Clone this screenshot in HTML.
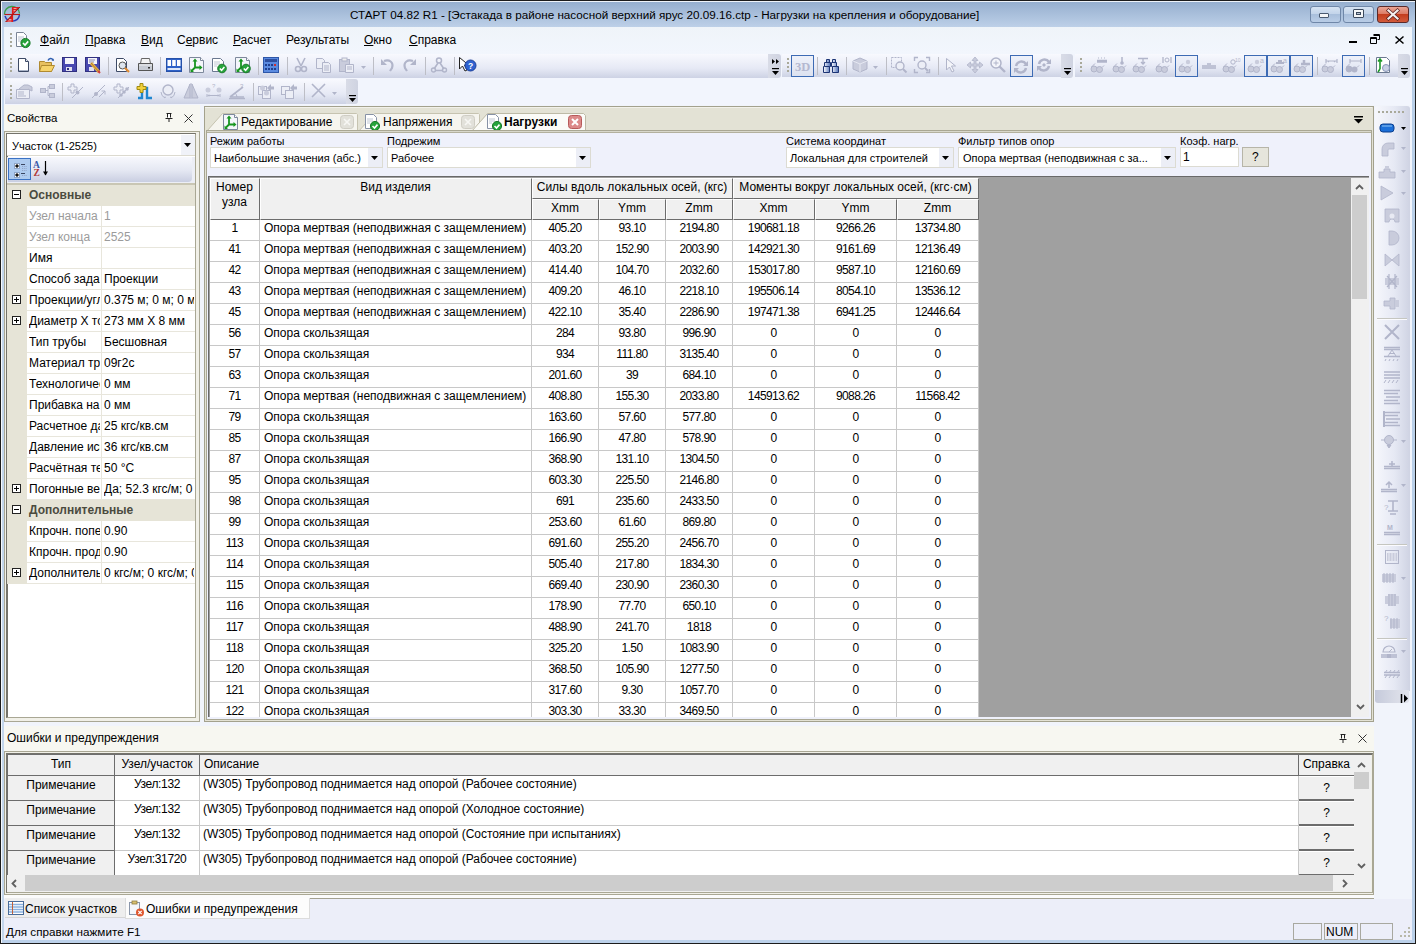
<!DOCTYPE html>
<html><head><meta charset="utf-8">
<style>
*{box-sizing:border-box}
html,body{margin:0;padding:0}
body{width:1416px;height:944px;overflow:hidden;position:relative;background:#f1f4fb;font-family:"Liberation Sans",sans-serif;font-size:12px;color:#000}
.a{position:absolute}
.t{position:absolute;white-space:nowrap;line-height:14px}
svg{position:absolute;overflow:visible}
</style></head><body>
<!-- window frame -->
<div class="a" style="left:0;top:0;width:1416px;height:1px;background:#1c1c1c"></div>
<div class="a" style="left:0;top:943px;width:1416px;height:1px;background:#1c1c1c"></div>
<div class="a" style="left:0;top:0;width:1px;height:944px;background:#1c1c1c"></div>
<div class="a" style="left:1415px;top:0;width:1px;height:944px;background:#1c1c1c"></div>
<div class="a" style="left:1px;top:1px;width:1414px;height:1px;background:#eef3f9"></div>
<!-- title bar -->
<div class="a" style="left:2px;top:2px;width:1413px;height:25px;background:linear-gradient(#96afcf,#bdd0e8)"></div>
<div class="a" style="left:1px;top:2px;width:1px;height:940px;background:#f4f8fc"></div><div class="a" style="left:2px;top:27px;width:2px;height:914px;background:#c3d6ec"></div>
<div class="a" style="left:1412px;top:27px;width:3px;height:914px;background:#b9cfe8"></div>
<div class="a" style="left:2px;top:940px;width:1413px;height:3px;background:#bcd1ea"></div>
<div class="t" style="left:350px;top:8px;font-size:11.7px;color:#000">СТАРТ 04.82 R1 - [Эстакада в районе насосной верхний ярус 20.09.16.ctp - Нагрузки на крепления и оборудование]</div>
<!-- app icon -->
<svg style="left:4px;top:6px" width="17" height="17" viewBox="0 0 17 17">
<path d="M0.5 8.5A7.5 7.5 0 0 1 15.5 7.5" fill="none" stroke="#3aa04a" stroke-width="1.4"/>
<path d="M15.5 9A7.5 7.5 0 0 1 1 10" fill="none" stroke="#2b3fb8" stroke-width="1.4"/>
<path d="M8.5 1H16L8.5 8.5Z" fill="#d42020"/>
<path d="M1.5 16H8.5V8.5Z" fill="#d42020"/>
<path fill="none" d="M9.5 2.5h3M9.5 4.5h2M9.5 6h1M7.5 11v0M5 13.5h2.5M3.5 15h4" stroke="#f6c0c0" stroke-width="0.8"/>
<path fill="none" d="M0.5 8.5H16" stroke="#b81818" stroke-width="1.1"/>
<path fill="none" d="M8.5 1V16" stroke="#e01a1a" stroke-width="1.2"/>
<path fill="none" d="M16 1L1.5 16" stroke="#9a1010" stroke-width="0.9"/>
</svg>
<!-- title buttons -->
<div class="a" style="left:1310px;top:6px;width:31px;height:17px;border:1px solid #6f87a8;border-radius:3px;background:linear-gradient(#d6e3f2 0%,#c3d4ea 45%,#a9bfdc 50%,#b9cde6 100%)"></div>
<div class="a" style="left:1319px;top:13px;width:10px;height:5px;border:1px solid #4a5a70;border-radius:1px;background:#f4f6f8"></div>
<div class="a" style="left:1343px;top:6px;width:31px;height:17px;border:1px solid #6f87a8;border-radius:3px;background:linear-gradient(#d6e3f2 0%,#c3d4ea 45%,#a9bfdc 50%,#b9cde6 100%)"></div>
<div class="a" style="left:1353px;top:9px;width:11px;height:9px;border:1px solid #3c4a5e;border-radius:1px;background:#f4f6f8"></div>
<div class="a" style="left:1356px;top:12px;width:5px;height:3px;border:1px solid #3c4a5e;background:#b9c6d6"></div>
<div class="a" style="left:1377px;top:6px;width:32px;height:17px;border:1px solid #5a2a2a;border-radius:3px;background:linear-gradient(#e8a595 0%,#dc7c66 45%,#c33d1e 50%,#d25a3a 100%)"></div>
<svg style="left:1386px;top:9px" width="14" height="11" viewBox="0 0 14 11"><path fill="none" d="M2.5 1.5L11.5 9.5M11.5 1.5L2.5 9.5" stroke="#5a2020" stroke-width="3.6" stroke-linecap="square"/><path fill="none" d="M2.5 1.5L11.5 9.5M11.5 1.5L2.5 9.5" stroke="#f4f0f0" stroke-width="2.2" stroke-linecap="square"/></svg>
<!-- menu bar -->
<div class="a" style="left:4px;top:27px;width:1408px;height:27px;background:linear-gradient(#eff4f9,#f2f6fd)"></div>
<div class="a" style="left:4px;top:54px;width:1408px;height:51px;background:#f2f5fd"></div>
<!-- menu -->
<div class="a" style="left:10px;top:33px;width:2px;height:14px;background:repeating-linear-gradient(#a9a99a 0 2px,transparent 2px 4px)"></div>
<svg style="left:15px;top:32px" width="16" height="16" viewBox="0 0 16 16">
<path d="M1.5 0.5H8.5L11.5 3.5V14.5H1.5Z" fill="#fff" stroke="#7a8596"/>
<path fill="none" d="M3 5h6M3 7h6M3 9h3" stroke="#b8c2d0"/>
<circle cx="10.5" cy="11" r="4.6" fill="#24a33a" stroke="#1b7a2b"/>
<path d="M8 11l2 2 3.2-3.6" stroke="#fff" stroke-width="1.6" fill="none"/>
</svg>
<div class="t" style="left:40px;top:33px;font-size:12px"><u>Ф</u>айл</div>
<div class="t" style="left:85px;top:33px;font-size:12px"><u>П</u>равка</div>
<div class="t" style="left:141px;top:33px;font-size:12px"><u>В</u>ид</div>
<div class="t" style="left:177px;top:33px;font-size:12px">С<u>е</u>рвис</div>
<div class="t" style="left:233px;top:33px;font-size:12px"><u>Р</u>асчет</div>
<div class="t" style="left:286px;top:33px;font-size:12px">Результаты</div>
<div class="t" style="left:364px;top:33px;font-size:12px"><u>О</u>кно</div>
<div class="t" style="left:409px;top:33px;font-size:12px"><u>С</u>правка</div>
<!-- MDI buttons -->
<div class="a" style="left:1349px;top:41px;width:8px;height:2px;background:#000"></div>
<svg style="left:1370px;top:34px" width="10" height="10" viewBox="0 0 10 10"><path d="M3.5 0.5h6v5h-2M0.5 3.5h6v6h-6z" fill="none" stroke="#000"/><path fill="none" d="M3.5 1.5h6M0.5 4.5h6" stroke="#000"/></svg>
<svg style="left:1395px;top:36px" width="9" height="8" viewBox="0 0 9 8"><path fill="none" d="M0.5 0.5L8.5 7.5M8.5 0.5L0.5 7.5" stroke="#000" stroke-width="1.5"/></svg>
<!-- toolbar backgrounds -->
<div class="a" style="left:5px;top:54px;width:764px;height:24px;border-radius:0 0 0 0;background:linear-gradient(#f8f9fe,#e6e9f5 60%,#cdd2e4)"></div>
<div class="a" style="left:768px;top:54px;width:13px;height:24px;border-radius:0 3px 3px 0;background:linear-gradient(90deg,#d9dce7,#cfd3e1)"></div>
<div class="a" style="left:782px;top:54px;width:279px;height:23px;background:linear-gradient(#f8f9fe,#e6e9f5 60%,#cdd2e4)"></div>
<div class="a" style="left:1061px;top:54px;width:12px;height:24px;border-radius:0 3px 3px 0;background:linear-gradient(90deg,#d9dce7,#cfd3e1)"></div>
<div class="a" style="left:1075px;top:54px;width:324px;height:23px;background:linear-gradient(#f8f9fe,#e6e9f5 60%,#cdd2e4)"></div>
<div class="a" style="left:1398px;top:54px;width:12px;height:24px;border-radius:0 3px 3px 0;background:linear-gradient(90deg,#d9dce7,#cfd3e1)"></div>
<div class="a" style="left:5px;top:79px;width:342px;height:25px;background:linear-gradient(#f8f9fe,#e6e9f5 60%,#cdd2e4)"></div>
<div class="a" style="left:346px;top:79px;width:12px;height:25px;border-radius:0 3px 3px 0;background:linear-gradient(90deg,#d9dce7,#cfd3e1)"></div>
<!-- grips -->
<div class="a" style="left:10px;top:58px;width:2px;height:15px;background:repeating-linear-gradient(#a9a99a 0 2px,transparent 2px 4px)"></div>
<div class="a" style="left:10px;top:85px;width:2px;height:15px;background:repeating-linear-gradient(#a9a99a 0 2px,transparent 2px 4px)"></div>
<div class="a" style="left:787px;top:58px;width:2px;height:15px;background:repeating-linear-gradient(#a9a99a 0 2px,transparent 2px 4px)"></div>
<div class="a" style="left:1080px;top:58px;width:2px;height:15px;background:repeating-linear-gradient(#a9a99a 0 2px,transparent 2px 4px)"></div>
<!-- chevrons -->
<svg style="left:771px;top:58px" width="9" height="18" viewBox="0 0 9 18"><path d="M1 1L4 3.5L1 6ZM5 1L8 3.5L5 6Z" fill="#000"/><rect x="1" y="10" width="7" height="1.2" fill="#000"/><path d="M1 13H8L4.5 17Z" fill="#000"/></svg>
<svg style="left:1063px;top:68px" width="9" height="8" viewBox="0 0 9 8"><rect x="1" y="0" width="7" height="1.2" fill="#000"/><path d="M1 3H8L4.5 7Z" fill="#000"/></svg>
<svg style="left:1400px;top:68px" width="9" height="8" viewBox="0 0 9 8"><rect x="1" y="0" width="7" height="1.2" fill="#000"/><path d="M1 3H8L4.5 7Z" fill="#000"/></svg>
<svg style="left:348px;top:95px" width="9" height="8" viewBox="0 0 9 8"><rect x="1" y="0" width="7" height="1.2" fill="#000"/><path d="M1 3H8L4.5 7Z" fill="#000"/></svg>
<!-- properties panel -->
<div class="a" style="left:4px;top:105px;width:196px;height:26px;background:#f7f7f1"></div>
<div class="t" style="left:7px;top:111px;font-size:11.5px">Свойства</div>
<svg style="left:165px;top:113px" width="8" height="9" viewBox="0 0 8 9"><path d="M1.5 0.5h5M2.5 0.5v4M5.5 0.5v4M0.5 5.5h7M4 5.5v3.5" stroke="#222" fill="none"/><path d="M3 1h2v4h-2z" fill="#fff"/></svg>
<svg style="left:184px;top:114px" width="9" height="9" viewBox="0 0 9 9"><path fill="none" d="M0.5 0.5L8.5 8.5M8.5 0.5L0.5 8.5" stroke="#333" stroke-width="1"/></svg>
<div class="a" style="left:4px;top:131px;width:196px;height:591px;border:1px solid #a9a794;background:#f1f0e8"></div>
<div class="a" style="left:6px;top:133px;width:190px;height:585px;border-left:2px solid #74736b;border-top:2px solid #74736b;border-right:1px solid #a9a794;border-bottom:1px solid #a9a794"></div>

<div class="a" style="left:8px;top:135px;width:187px;height:582px;background:#fff"></div>
<!-- combo -->
<div class="a" style="left:7px;top:134px;width:188px;height:22px;background:#fff;border-bottom:1px solid #dcdad0"></div>
<div class="t" style="left:12px;top:139px;font-size:11px">Участок (1-2525)</div>
<div class="a" style="left:181px;top:135px;width:14px;height:20px;background:#f0f2f8"></div>
<svg style="left:184px;top:143px" width="7" height="4" viewBox="0 0 7 4"><path d="M0 0h7l-3.5 4z" fill="#000"/></svg>
<!-- toolbar -->
<div class="a" style="left:7px;top:157px;width:188px;height:26px;background:#eceef6"></div>
<div class="a" style="left:8px;top:157px;width:184px;height:25px;border-radius:0 0 4px 0;background:linear-gradient(#f7f8fd,#e4e7f2 55%,#c9cee1)"></div>
<div class="a" style="left:8px;top:158px;width:23px;height:22px;background:#aecbef;border:1px solid #3a72c4"></div>
<svg style="left:11px;top:161px" width="17" height="16" viewBox="0 0 17 16">
<rect x="3.5" y="2.5" width="5" height="5" fill="#fff" stroke="#8fa6c8"/><path d="M4.3 5h3.4M6 3.3v3.4" stroke="#000" stroke-width="1.4"/>
<rect x="3.5" y="11.5" width="5" height="5" fill="#fff" stroke="#8fa6c8"/><path d="M4.3 14h3.4M6 12.3v3.4" stroke="#000" stroke-width="1.4"/>
<path d="M10 3.5h4M10 12.5h4" stroke="#3a4560" stroke-width="1.2"/>
<path d="M11 5.5h5M11 7.5h5M11 9.5h5M11 14.5h5" stroke="#8fa2c4" stroke-dasharray="1.2 1" stroke-width="0.9"/>
</svg>
<svg style="left:33px;top:160px" width="18" height="18" viewBox="0 0 18 18">
<text x="0" y="8" font-family="Liberation Serif" font-size="9.5" font-weight="bold" fill="#3b58a8">A</text>
<text x="0.5" y="16" font-family="Liberation Serif" font-size="9.5" font-weight="bold" fill="#b03838">Z</text>
<path d="M12.5 1V15" stroke="#000" stroke-width="1.2" fill="none"/><path d="M10 11.5L12.5 15.5L15 11.5Z" fill="#000"/>
</svg>
<div class="a" style="left:7px;top:183px;width:188px;height:2px;background:#c9c6b4"></div>
<!-- property grid -->
<div class="a" style="left:7px;top:185px;width:20px;height:399px;background:#e6e4d7"></div>
<div class="a" style="left:7px;top:185px;width:188px;height:21px;background:#e6e4d7"></div>
<svg style="left:12px;top:190px" width="9" height="9" viewBox="0 0 9 9"><rect x="0.5" y="0.5" width="8" height="8" fill="#fff" stroke="#222"/><path fill="none" d="M2 4.5h5" stroke="#000"/></svg>
<div class="t" style="left:29px;top:188px;font-size:12px;font-weight:bold;color:#4b4b3f">Основные</div>
<div class="a" style="left:27px;top:206px;width:168px;height:21px;background:#fff;border-bottom:1px solid #e8e6dc"></div>
<div class="a" style="left:101px;top:206px;width:1px;height:21px;background:#e8e6dc"></div>
<div class="t" style="left:29px;top:209px;width:71px;overflow:hidden;font-size:12px;color:#9b9b9b">Узел начала</div>
<div class="t" style="left:104px;top:209px;width:90px;overflow:hidden;font-size:12px;color:#9b9b9b">1</div>
<div class="a" style="left:27px;top:227px;width:168px;height:21px;background:#fff;border-bottom:1px solid #e8e6dc"></div>
<div class="a" style="left:101px;top:227px;width:1px;height:21px;background:#e8e6dc"></div>
<div class="t" style="left:29px;top:230px;width:71px;overflow:hidden;font-size:12px;color:#9b9b9b">Узел конца</div>
<div class="t" style="left:104px;top:230px;width:90px;overflow:hidden;font-size:12px;color:#9b9b9b">2525</div>
<div class="a" style="left:27px;top:248px;width:168px;height:21px;background:#fff;border-bottom:1px solid #e8e6dc"></div>
<div class="a" style="left:101px;top:248px;width:1px;height:21px;background:#e8e6dc"></div>
<div class="t" style="left:29px;top:251px;width:71px;overflow:hidden;font-size:12px;color:#000">Имя</div>
<div class="a" style="left:27px;top:269px;width:168px;height:21px;background:#fff;border-bottom:1px solid #e8e6dc"></div>
<div class="a" style="left:101px;top:269px;width:1px;height:21px;background:#e8e6dc"></div>
<div class="t" style="left:29px;top:272px;width:71px;overflow:hidden;font-size:12px;color:#000">Способ задания</div>
<div class="t" style="left:104px;top:272px;width:90px;overflow:hidden;font-size:12px;color:#000">Проекции</div>
<div class="a" style="left:27px;top:290px;width:168px;height:21px;background:#fff;border-bottom:1px solid #e8e6dc"></div>
<div class="a" style="left:101px;top:290px;width:1px;height:21px;background:#e8e6dc"></div>
<div class="t" style="left:29px;top:293px;width:71px;overflow:hidden;font-size:12px;color:#000">Проекции/углы</div>
<div class="t" style="left:104px;top:293px;width:90px;overflow:hidden;font-size:12px;color:#000">0.375 м; 0 м; 0 м</div>
<svg style="left:12px;top:295px" width="9" height="9" viewBox="0 0 9 9"><rect x="0.5" y="0.5" width="8" height="8" fill="#fff" stroke="#222"/><path fill="none" d="M2 4.5h5M4.5 2v5" stroke="#000"/></svg>
<div class="a" style="left:27px;top:311px;width:168px;height:21px;background:#fff;border-bottom:1px solid #e8e6dc"></div>
<div class="a" style="left:101px;top:311px;width:1px;height:21px;background:#e8e6dc"></div>
<div class="t" style="left:29px;top:314px;width:71px;overflow:hidden;font-size:12px;color:#000">Диаметр X толщина</div>
<div class="t" style="left:104px;top:314px;width:90px;overflow:hidden;font-size:12px;color:#000">273 мм X 8 мм</div>
<svg style="left:12px;top:316px" width="9" height="9" viewBox="0 0 9 9"><rect x="0.5" y="0.5" width="8" height="8" fill="#fff" stroke="#222"/><path fill="none" d="M2 4.5h5M4.5 2v5" stroke="#000"/></svg>
<div class="a" style="left:27px;top:332px;width:168px;height:21px;background:#fff;border-bottom:1px solid #e8e6dc"></div>
<div class="a" style="left:101px;top:332px;width:1px;height:21px;background:#e8e6dc"></div>
<div class="t" style="left:29px;top:335px;width:71px;overflow:hidden;font-size:12px;color:#000">Тип трубы</div>
<div class="t" style="left:104px;top:335px;width:90px;overflow:hidden;font-size:12px;color:#000">Бесшовная</div>
<div class="a" style="left:27px;top:353px;width:168px;height:21px;background:#fff;border-bottom:1px solid #e8e6dc"></div>
<div class="a" style="left:101px;top:353px;width:1px;height:21px;background:#e8e6dc"></div>
<div class="t" style="left:29px;top:356px;width:71px;overflow:hidden;font-size:12px;color:#000">Материал трубы</div>
<div class="t" style="left:104px;top:356px;width:90px;overflow:hidden;font-size:12px;color:#000">09г2с</div>
<div class="a" style="left:27px;top:374px;width:168px;height:21px;background:#fff;border-bottom:1px solid #e8e6dc"></div>
<div class="a" style="left:101px;top:374px;width:1px;height:21px;background:#e8e6dc"></div>
<div class="t" style="left:29px;top:377px;width:71px;overflow:hidden;font-size:12px;color:#000">Технологический</div>
<div class="t" style="left:104px;top:377px;width:90px;overflow:hidden;font-size:12px;color:#000">0 мм</div>
<div class="a" style="left:27px;top:395px;width:168px;height:21px;background:#fff;border-bottom:1px solid #e8e6dc"></div>
<div class="a" style="left:101px;top:395px;width:1px;height:21px;background:#e8e6dc"></div>
<div class="t" style="left:29px;top:398px;width:71px;overflow:hidden;font-size:12px;color:#000">Прибавка на коррозию</div>
<div class="t" style="left:104px;top:398px;width:90px;overflow:hidden;font-size:12px;color:#000">0 мм</div>
<div class="a" style="left:27px;top:416px;width:168px;height:21px;background:#fff;border-bottom:1px solid #e8e6dc"></div>
<div class="a" style="left:101px;top:416px;width:1px;height:21px;background:#e8e6dc"></div>
<div class="t" style="left:29px;top:419px;width:71px;overflow:hidden;font-size:12px;color:#000">Расчетное давление</div>
<div class="t" style="left:104px;top:419px;width:90px;overflow:hidden;font-size:12px;color:#000">25 кгс/кв.см</div>
<div class="a" style="left:27px;top:437px;width:168px;height:21px;background:#fff;border-bottom:1px solid #e8e6dc"></div>
<div class="a" style="left:101px;top:437px;width:1px;height:21px;background:#e8e6dc"></div>
<div class="t" style="left:29px;top:440px;width:71px;overflow:hidden;font-size:12px;color:#000">Давление испытаний</div>
<div class="t" style="left:104px;top:440px;width:90px;overflow:hidden;font-size:12px;color:#000">36 кгс/кв.см</div>
<div class="a" style="left:27px;top:458px;width:168px;height:21px;background:#fff;border-bottom:1px solid #e8e6dc"></div>
<div class="a" style="left:101px;top:458px;width:1px;height:21px;background:#e8e6dc"></div>
<div class="t" style="left:29px;top:461px;width:71px;overflow:hidden;font-size:12px;color:#000">Расчётная температура</div>
<div class="t" style="left:104px;top:461px;width:90px;overflow:hidden;font-size:12px;color:#000">50 °C</div>
<div class="a" style="left:27px;top:479px;width:168px;height:21px;background:#fff;border-bottom:1px solid #e8e6dc"></div>
<div class="a" style="left:101px;top:479px;width:1px;height:21px;background:#e8e6dc"></div>
<div class="t" style="left:29px;top:482px;width:71px;overflow:hidden;font-size:12px;color:#000">Погонные веса</div>
<div class="t" style="left:104px;top:482px;width:90px;overflow:hidden;font-size:12px;color:#000">Да; 52.3 кгс/м; 0 кгс/м</div>
<svg style="left:12px;top:484px" width="9" height="9" viewBox="0 0 9 9"><rect x="0.5" y="0.5" width="8" height="8" fill="#fff" stroke="#222"/><path fill="none" d="M2 4.5h5M4.5 2v5" stroke="#000"/></svg>
<div class="a" style="left:7px;top:500px;width:188px;height:21px;background:#e6e4d7"></div>
<svg style="left:12px;top:505px" width="9" height="9" viewBox="0 0 9 9"><rect x="0.5" y="0.5" width="8" height="8" fill="#fff" stroke="#222"/><path fill="none" d="M2 4.5h5" stroke="#000"/></svg>
<div class="t" style="left:29px;top:503px;font-size:12px;font-weight:bold;color:#4b4b3f">Дополнительные</div>
<div class="a" style="left:27px;top:521px;width:168px;height:21px;background:#fff;border-bottom:1px solid #e8e6dc"></div>
<div class="a" style="left:101px;top:521px;width:1px;height:21px;background:#e8e6dc"></div>
<div class="t" style="left:29px;top:524px;width:71px;overflow:hidden;font-size:12px;color:#000">Кпрочн. поперечного</div>
<div class="t" style="left:104px;top:524px;width:90px;overflow:hidden;font-size:12px;color:#000">0.90</div>
<div class="a" style="left:27px;top:542px;width:168px;height:21px;background:#fff;border-bottom:1px solid #e8e6dc"></div>
<div class="a" style="left:101px;top:542px;width:1px;height:21px;background:#e8e6dc"></div>
<div class="t" style="left:29px;top:545px;width:71px;overflow:hidden;font-size:12px;color:#000">Кпрочн. продольного</div>
<div class="t" style="left:104px;top:545px;width:90px;overflow:hidden;font-size:12px;color:#000">0.90</div>
<div class="a" style="left:27px;top:563px;width:168px;height:21px;background:#fff;border-bottom:1px solid #e8e6dc"></div>
<div class="a" style="left:101px;top:563px;width:1px;height:21px;background:#e8e6dc"></div>
<div class="t" style="left:29px;top:566px;width:71px;overflow:hidden;font-size:12px;color:#000">Дополнительные нагрузки</div>
<div class="t" style="left:104px;top:566px;width:90px;overflow:hidden;font-size:12px;color:#000">0 кгс/м; 0 кгс/м; 0</div>
<svg style="left:12px;top:568px" width="9" height="9" viewBox="0 0 9 9"><rect x="0.5" y="0.5" width="8" height="8" fill="#fff" stroke="#222"/><path fill="none" d="M2 4.5h5M4.5 2v5" stroke="#000"/></svg>
<!-- document area -->
<div class="a" style="left:204px;top:106px;width:1170px;height:616px;background:#e3e2d5;border:1px solid #a3a18d"></div>
<div class="a" style="left:205px;top:107px;width:1167px;height:1px;background:#f2f1ea"></div>
<!-- tabs -->
<svg style="left:205px;top:113px" width="385" height="19" viewBox="0 0 385 19">
<path d="M1.5 18.5L17.5 0.5H151.5L152.5 1.5V18.5Z" fill="#f6f5ef" stroke="#c6c3b0"/>
<path d="M153.5 18.5L169.5 0.5H273.5L274.5 1.5V18.5Z" fill="#f6f5ef" stroke="#c6c3b0"/>
<path d="M266.5 18.5L282.5 0.5H378.5L380.5 2.5V18.5" fill="#fbfbf8" stroke="#bdbaa6"/>
</svg>
<!-- tab icons -->
<svg style="left:223px;top:114px" width="16" height="17" viewBox="0 0 16 17">
<path d="M0.5 0.5H11.5L14.5 3.5V15.5H0.5Z" fill="#f4f6fb" stroke="#7d889c"/>
<path d="M11.5 0.5V3.5H14.5" fill="#fff" stroke="#7d889c"/>
<path d="M6 4V10.5H11M6 10.5L3 13.5" fill="none" stroke="#17951f" stroke-width="1.8"/>
<path d="M3.5 4.5L6 1.5L8.5 4.5ZM10.5 8L13.5 10.5L10.5 13ZM1.5 11.5V15H5Z" fill="#17951f"/>
</svg>
<div class="t" style="left:241px;top:115px;font-size:12px">Редактирование</div>
<svg style="left:340px;top:115px" width="14" height="14" viewBox="0 0 14 14"><rect x="0.5" y="0.5" width="13" height="13" rx="3" fill="#e2e1da" stroke="#cfcdc4"/><path fill="none" d="M4 4l6 6M10 4l-6 6" stroke="#f7f7f4" stroke-width="1.6"/></svg>
<svg style="left:364px;top:114px" width="17" height="17" viewBox="0 0 17 17">
<path d="M1.5 0.5H9.5L12.5 3.5V14.5H1.5Z" fill="#fff" stroke="#8792a6"/>
<path fill="none" d="M3 5h6M3 7h6M3 9h3" stroke="#c0c8d4"/>
<circle cx="11" cy="12" r="4.6" fill="#24a33a" stroke="#1b7a2b"/>
<path d="M8.5 12l2 2 3-3.4" stroke="#fff" stroke-width="1.6" fill="none"/>
</svg>
<div class="t" style="left:383px;top:115px;font-size:12px">Напряжения</div>
<svg style="left:461px;top:115px" width="14" height="14" viewBox="0 0 14 14"><rect x="0.5" y="0.5" width="13" height="13" rx="3" fill="#e2e1da" stroke="#cfcdc4"/><path fill="none" d="M4 4l6 6M10 4l-6 6" stroke="#f7f7f4" stroke-width="1.6"/></svg>
<svg style="left:486px;top:114px" width="17" height="17" viewBox="0 0 17 17">
<path d="M1.5 0.5H9.5L12.5 3.5V14.5H1.5Z" fill="#fff" stroke="#8792a6"/>
<path fill="none" d="M3 5h6M3 7h6M3 9h3" stroke="#c0c8d4"/>
<circle cx="11" cy="12" r="4.6" fill="#24a33a" stroke="#1b7a2b"/>
<path d="M8.5 12l2 2 3-3.4" stroke="#fff" stroke-width="1.6" fill="none"/>
</svg>
<div class="t" style="left:504px;top:115px;font-size:12px;font-weight:bold">Нагрузки</div>
<svg style="left:568px;top:115px" width="14" height="14" viewBox="0 0 14 14"><rect x="0.5" y="0.5" width="13" height="13" rx="3" fill="#dc8a8a" stroke="#b75a5a"/><path fill="none" d="M4 4l6 6M10 4l-6 6" stroke="#fff" stroke-width="2"/></svg>
<!-- chevron right of tab strip -->
<svg style="left:1354px;top:116px" width="9" height="8" viewBox="0 0 9 8"><rect x="0" y="0" width="9" height="1.5" fill="#000"/><path d="M0 3H9L4.5 7.5Z" fill="#000"/></svg>
<!-- content panel -->
<div class="a" style="left:206px;top:130px;width:1166px;height:590px;background:#eff1fb;border:1px solid #a9a793"></div>
<div class="a" style="left:207px;top:131px;width:1164px;height:1px;background:#d9d8cb"></div>
<div class="a" style="left:207px;top:132px;width:1164px;height:1px;background:#b3b19e"></div>

<!-- labels/combos -->
<div class="t" style="left:210px;top:134px;font-size:11px">Режим работы</div>
<div class="a" style="left:210px;top:147px;width:173px;height:21px;background:#fff;border:1px solid #dcdbd2"></div>
<div class="t" style="left:214px;top:151px;font-size:11px">Наибольшие значения (абс.)</div>
<div class="a" style="left:368px;top:148px;width:14px;height:19px;background:#eceef6"></div>
<svg style="left:371px;top:156px" width="7" height="4" viewBox="0 0 7 4"><path d="M0 0h7l-3.5 4z" fill="#000"/></svg>
<div class="t" style="left:387px;top:134px;font-size:11px">Подрежим</div>
<div class="a" style="left:387px;top:147px;width:204px;height:21px;background:#fff;border:1px solid #dcdbd2"></div>
<div class="t" style="left:391px;top:151px;font-size:11px">Рабочее</div>
<div class="a" style="left:576px;top:148px;width:14px;height:19px;background:#eceef6"></div>
<svg style="left:579px;top:156px" width="7" height="4" viewBox="0 0 7 4"><path d="M0 0h7l-3.5 4z" fill="#000"/></svg>
<div class="t" style="left:786px;top:134px;font-size:11px">Система координат</div>
<div class="a" style="left:786px;top:147px;width:168px;height:21px;background:#fff;border:1px solid #dcdbd2"></div>
<div class="t" style="left:790px;top:151px;font-size:11px">Локальная для строителей</div>
<div class="a" style="left:939px;top:148px;width:14px;height:19px;background:#eceef6"></div>
<svg style="left:942px;top:156px" width="7" height="4" viewBox="0 0 7 4"><path d="M0 0h7l-3.5 4z" fill="#000"/></svg>
<div class="t" style="left:958px;top:134px;font-size:11px">Фильтр типов опор</div>
<div class="a" style="left:958px;top:147px;width:218px;height:21px;background:#fff;border:1px solid #dcdbd2"></div>
<div class="t" style="left:963px;top:151px;font-size:11px">Опора мертвая (неподвижная с за...</div>
<div class="a" style="left:1161px;top:148px;width:14px;height:19px;background:#eceef6"></div>
<svg style="left:1164px;top:156px" width="7" height="4" viewBox="0 0 7 4"><path d="M0 0h7l-3.5 4z" fill="#000"/></svg>
<div class="t" style="left:1180px;top:134px;font-size:11px">Коэф. нагр.</div>
<div class="a" style="left:1180px;top:147px;width:59px;height:20px;background:#fff;border:1px solid #dcdbd2"></div>
<div class="t" style="left:1183px;top:150px;font-size:12px">1</div>
<div class="a" style="left:1242px;top:147px;width:27px;height:20px;background:#e6e5dc;border:1px solid #b7b5a8"></div>
<div class="t" style="left:1252px;top:150px;font-size:12px">?</div>
<!-- grid -->
<div class="a" style="left:208px;top:176px;width:1161px;height:541px;background:#a0a0a0;overflow:hidden" id="grid">
<div class="a" style="left:2px;top:44px;width:769px;height:497px;background:#fff"></div>
<div class="a" style="left:0;top:0;width:1161px;height:1px;background:#696969"></div>
<div class="a" style="left:0;top:0;width:1px;height:541px;background:#696969"></div>
<div class="a" style="left:1px;top:1px;width:1160px;height:1px;background:#a0a0a0"></div>
<div class="a" style="left:1px;top:1px;width:1px;height:540px;background:#a0a0a0"></div>
<div class="a" style="left:2px;top:2px;width:50px;height:42px;background:#f0f0f0;border-right:1px solid #6c6c6c;border-bottom:1px solid #6c6c6c;border-left:1px solid #fff;border-top:1px solid #fff"></div>
<div class="a" style="left:52px;top:2px;width:272px;height:42px;background:#f0f0f0;border-right:1px solid #6c6c6c;border-bottom:1px solid #6c6c6c;border-left:1px solid #fff;border-top:1px solid #fff"></div>
<div class="a" style="left:324px;top:2px;width:201px;height:21px;background:#f0f0f0;border-right:1px solid #6c6c6c;border-bottom:1px solid #6c6c6c;border-left:1px solid #fff;border-top:1px solid #fff"></div>
<div class="a" style="left:525px;top:2px;width:246px;height:21px;background:#f0f0f0;border-right:1px solid #6c6c6c;border-bottom:1px solid #6c6c6c;border-left:1px solid #fff;border-top:1px solid #fff"></div>
<div class="a" style="left:324px;top:23px;width:67px;height:21px;background:#f0f0f0;border-right:1px solid #6c6c6c;border-bottom:1px solid #6c6c6c;border-left:1px solid #fff;border-top:1px solid #fff"></div>
<div class="a" style="left:391px;top:23px;width:67px;height:21px;background:#f0f0f0;border-right:1px solid #6c6c6c;border-bottom:1px solid #6c6c6c;border-left:1px solid #fff;border-top:1px solid #fff"></div>
<div class="a" style="left:458px;top:23px;width:67px;height:21px;background:#f0f0f0;border-right:1px solid #6c6c6c;border-bottom:1px solid #6c6c6c;border-left:1px solid #fff;border-top:1px solid #fff"></div>
<div class="a" style="left:525px;top:23px;width:82px;height:21px;background:#f0f0f0;border-right:1px solid #6c6c6c;border-bottom:1px solid #6c6c6c;border-left:1px solid #fff;border-top:1px solid #fff"></div>
<div class="a" style="left:607px;top:23px;width:82px;height:21px;background:#f0f0f0;border-right:1px solid #6c6c6c;border-bottom:1px solid #6c6c6c;border-left:1px solid #fff;border-top:1px solid #fff"></div>
<div class="a" style="left:689px;top:23px;width:82px;height:21px;background:#f0f0f0;border-right:1px solid #6c6c6c;border-bottom:1px solid #6c6c6c;border-left:1px solid #fff;border-top:1px solid #fff"></div>
<div class="t" style="left:2px;top:4px;width:49px;text-align:center;">Номер</div>
<div class="t" style="left:2px;top:19px;width:49px;text-align:center;">узла</div>
<div class="t" style="left:52px;top:4px;width:271px;text-align:center;">Вид изделия</div>
<div class="t" style="left:324px;top:4px;width:200px;text-align:center;">Силы вдоль локальных осей, (кгс)</div>
<div class="t" style="left:525px;top:4px;width:245px;text-align:center;">Моменты вокруг локальных осей, (кгс·см)</div>
<div class="t" style="left:324px;top:25px;width:66px;text-align:center;">Xmm</div>
<div class="t" style="left:391px;top:25px;width:66px;text-align:center;">Ymm</div>
<div class="t" style="left:458px;top:25px;width:66px;text-align:center;">Zmm</div>
<div class="t" style="left:525px;top:25px;width:81px;text-align:center;">Xmm</div>
<div class="t" style="left:607px;top:25px;width:81px;text-align:center;">Ymm</div>
<div class="t" style="left:689px;top:25px;width:81px;text-align:center;">Zmm</div>
<div class="a" style="left:2px;top:64px;width:769px;height:1px;background:#c8c8c8"></div>
<div class="t" style="left:2px;top:45px;width:49px;text-align:center;letter-spacing:-0.6px">1</div>
<div class="t" style="left:56px;top:45px;width:265px;text-align:left;">Опора мертвая (неподвижная с защемлением)</div>
<div class="t" style="left:324px;top:45px;width:66px;text-align:center;letter-spacing:-0.6px">405.20</div>
<div class="t" style="left:391px;top:45px;width:66px;text-align:center;letter-spacing:-0.6px">93.10</div>
<div class="t" style="left:458px;top:45px;width:66px;text-align:center;letter-spacing:-0.6px">2194.80</div>
<div class="t" style="left:525px;top:45px;width:81px;text-align:center;letter-spacing:-0.6px">190681.18</div>
<div class="t" style="left:607px;top:45px;width:81px;text-align:center;letter-spacing:-0.6px">9266.26</div>
<div class="t" style="left:689px;top:45px;width:81px;text-align:center;letter-spacing:-0.6px">13734.80</div>
<div class="a" style="left:2px;top:85px;width:769px;height:1px;background:#c8c8c8"></div>
<div class="t" style="left:2px;top:66px;width:49px;text-align:center;letter-spacing:-0.6px">41</div>
<div class="t" style="left:56px;top:66px;width:265px;text-align:left;">Опора мертвая (неподвижная с защемлением)</div>
<div class="t" style="left:324px;top:66px;width:66px;text-align:center;letter-spacing:-0.6px">403.20</div>
<div class="t" style="left:391px;top:66px;width:66px;text-align:center;letter-spacing:-0.6px">152.90</div>
<div class="t" style="left:458px;top:66px;width:66px;text-align:center;letter-spacing:-0.6px">2003.90</div>
<div class="t" style="left:525px;top:66px;width:81px;text-align:center;letter-spacing:-0.6px">142921.30</div>
<div class="t" style="left:607px;top:66px;width:81px;text-align:center;letter-spacing:-0.6px">9161.69</div>
<div class="t" style="left:689px;top:66px;width:81px;text-align:center;letter-spacing:-0.6px">12136.49</div>
<div class="a" style="left:2px;top:106px;width:769px;height:1px;background:#c8c8c8"></div>
<div class="t" style="left:2px;top:87px;width:49px;text-align:center;letter-spacing:-0.6px">42</div>
<div class="t" style="left:56px;top:87px;width:265px;text-align:left;">Опора мертвая (неподвижная с защемлением)</div>
<div class="t" style="left:324px;top:87px;width:66px;text-align:center;letter-spacing:-0.6px">414.40</div>
<div class="t" style="left:391px;top:87px;width:66px;text-align:center;letter-spacing:-0.6px">104.70</div>
<div class="t" style="left:458px;top:87px;width:66px;text-align:center;letter-spacing:-0.6px">2032.60</div>
<div class="t" style="left:525px;top:87px;width:81px;text-align:center;letter-spacing:-0.6px">153017.80</div>
<div class="t" style="left:607px;top:87px;width:81px;text-align:center;letter-spacing:-0.6px">9587.10</div>
<div class="t" style="left:689px;top:87px;width:81px;text-align:center;letter-spacing:-0.6px">12160.69</div>
<div class="a" style="left:2px;top:127px;width:769px;height:1px;background:#c8c8c8"></div>
<div class="t" style="left:2px;top:108px;width:49px;text-align:center;letter-spacing:-0.6px">43</div>
<div class="t" style="left:56px;top:108px;width:265px;text-align:left;">Опора мертвая (неподвижная с защемлением)</div>
<div class="t" style="left:324px;top:108px;width:66px;text-align:center;letter-spacing:-0.6px">409.20</div>
<div class="t" style="left:391px;top:108px;width:66px;text-align:center;letter-spacing:-0.6px">46.10</div>
<div class="t" style="left:458px;top:108px;width:66px;text-align:center;letter-spacing:-0.6px">2218.10</div>
<div class="t" style="left:525px;top:108px;width:81px;text-align:center;letter-spacing:-0.6px">195506.14</div>
<div class="t" style="left:607px;top:108px;width:81px;text-align:center;letter-spacing:-0.6px">8054.10</div>
<div class="t" style="left:689px;top:108px;width:81px;text-align:center;letter-spacing:-0.6px">13536.12</div>
<div class="a" style="left:2px;top:148px;width:769px;height:1px;background:#c8c8c8"></div>
<div class="t" style="left:2px;top:129px;width:49px;text-align:center;letter-spacing:-0.6px">45</div>
<div class="t" style="left:56px;top:129px;width:265px;text-align:left;">Опора мертвая (неподвижная с защемлением)</div>
<div class="t" style="left:324px;top:129px;width:66px;text-align:center;letter-spacing:-0.6px">422.10</div>
<div class="t" style="left:391px;top:129px;width:66px;text-align:center;letter-spacing:-0.6px">35.40</div>
<div class="t" style="left:458px;top:129px;width:66px;text-align:center;letter-spacing:-0.6px">2286.90</div>
<div class="t" style="left:525px;top:129px;width:81px;text-align:center;letter-spacing:-0.6px">197471.38</div>
<div class="t" style="left:607px;top:129px;width:81px;text-align:center;letter-spacing:-0.6px">6941.25</div>
<div class="t" style="left:689px;top:129px;width:81px;text-align:center;letter-spacing:-0.6px">12446.64</div>
<div class="a" style="left:2px;top:169px;width:769px;height:1px;background:#c8c8c8"></div>
<div class="t" style="left:2px;top:150px;width:49px;text-align:center;letter-spacing:-0.6px">56</div>
<div class="t" style="left:56px;top:150px;width:265px;text-align:left;">Опора скользящая</div>
<div class="t" style="left:324px;top:150px;width:66px;text-align:center;letter-spacing:-0.6px">284</div>
<div class="t" style="left:391px;top:150px;width:66px;text-align:center;letter-spacing:-0.6px">93.80</div>
<div class="t" style="left:458px;top:150px;width:66px;text-align:center;letter-spacing:-0.6px">996.90</div>
<div class="t" style="left:525px;top:150px;width:81px;text-align:center;letter-spacing:-0.6px">0</div>
<div class="t" style="left:607px;top:150px;width:81px;text-align:center;letter-spacing:-0.6px">0</div>
<div class="t" style="left:689px;top:150px;width:81px;text-align:center;letter-spacing:-0.6px">0</div>
<div class="a" style="left:2px;top:190px;width:769px;height:1px;background:#c8c8c8"></div>
<div class="t" style="left:2px;top:171px;width:49px;text-align:center;letter-spacing:-0.6px">57</div>
<div class="t" style="left:56px;top:171px;width:265px;text-align:left;">Опора скользящая</div>
<div class="t" style="left:324px;top:171px;width:66px;text-align:center;letter-spacing:-0.6px">934</div>
<div class="t" style="left:391px;top:171px;width:66px;text-align:center;letter-spacing:-0.6px">111.80</div>
<div class="t" style="left:458px;top:171px;width:66px;text-align:center;letter-spacing:-0.6px">3135.40</div>
<div class="t" style="left:525px;top:171px;width:81px;text-align:center;letter-spacing:-0.6px">0</div>
<div class="t" style="left:607px;top:171px;width:81px;text-align:center;letter-spacing:-0.6px">0</div>
<div class="t" style="left:689px;top:171px;width:81px;text-align:center;letter-spacing:-0.6px">0</div>
<div class="a" style="left:2px;top:211px;width:769px;height:1px;background:#c8c8c8"></div>
<div class="t" style="left:2px;top:192px;width:49px;text-align:center;letter-spacing:-0.6px">63</div>
<div class="t" style="left:56px;top:192px;width:265px;text-align:left;">Опора скользящая</div>
<div class="t" style="left:324px;top:192px;width:66px;text-align:center;letter-spacing:-0.6px">201.60</div>
<div class="t" style="left:391px;top:192px;width:66px;text-align:center;letter-spacing:-0.6px">39</div>
<div class="t" style="left:458px;top:192px;width:66px;text-align:center;letter-spacing:-0.6px">684.10</div>
<div class="t" style="left:525px;top:192px;width:81px;text-align:center;letter-spacing:-0.6px">0</div>
<div class="t" style="left:607px;top:192px;width:81px;text-align:center;letter-spacing:-0.6px">0</div>
<div class="t" style="left:689px;top:192px;width:81px;text-align:center;letter-spacing:-0.6px">0</div>
<div class="a" style="left:2px;top:232px;width:769px;height:1px;background:#c8c8c8"></div>
<div class="t" style="left:2px;top:213px;width:49px;text-align:center;letter-spacing:-0.6px">71</div>
<div class="t" style="left:56px;top:213px;width:265px;text-align:left;">Опора мертвая (неподвижная с защемлением)</div>
<div class="t" style="left:324px;top:213px;width:66px;text-align:center;letter-spacing:-0.6px">408.80</div>
<div class="t" style="left:391px;top:213px;width:66px;text-align:center;letter-spacing:-0.6px">155.30</div>
<div class="t" style="left:458px;top:213px;width:66px;text-align:center;letter-spacing:-0.6px">2033.80</div>
<div class="t" style="left:525px;top:213px;width:81px;text-align:center;letter-spacing:-0.6px">145913.62</div>
<div class="t" style="left:607px;top:213px;width:81px;text-align:center;letter-spacing:-0.6px">9088.26</div>
<div class="t" style="left:689px;top:213px;width:81px;text-align:center;letter-spacing:-0.6px">11568.42</div>
<div class="a" style="left:2px;top:253px;width:769px;height:1px;background:#c8c8c8"></div>
<div class="t" style="left:2px;top:234px;width:49px;text-align:center;letter-spacing:-0.6px">79</div>
<div class="t" style="left:56px;top:234px;width:265px;text-align:left;">Опора скользящая</div>
<div class="t" style="left:324px;top:234px;width:66px;text-align:center;letter-spacing:-0.6px">163.60</div>
<div class="t" style="left:391px;top:234px;width:66px;text-align:center;letter-spacing:-0.6px">57.60</div>
<div class="t" style="left:458px;top:234px;width:66px;text-align:center;letter-spacing:-0.6px">577.80</div>
<div class="t" style="left:525px;top:234px;width:81px;text-align:center;letter-spacing:-0.6px">0</div>
<div class="t" style="left:607px;top:234px;width:81px;text-align:center;letter-spacing:-0.6px">0</div>
<div class="t" style="left:689px;top:234px;width:81px;text-align:center;letter-spacing:-0.6px">0</div>
<div class="a" style="left:2px;top:274px;width:769px;height:1px;background:#c8c8c8"></div>
<div class="t" style="left:2px;top:255px;width:49px;text-align:center;letter-spacing:-0.6px">85</div>
<div class="t" style="left:56px;top:255px;width:265px;text-align:left;">Опора скользящая</div>
<div class="t" style="left:324px;top:255px;width:66px;text-align:center;letter-spacing:-0.6px">166.90</div>
<div class="t" style="left:391px;top:255px;width:66px;text-align:center;letter-spacing:-0.6px">47.80</div>
<div class="t" style="left:458px;top:255px;width:66px;text-align:center;letter-spacing:-0.6px">578.90</div>
<div class="t" style="left:525px;top:255px;width:81px;text-align:center;letter-spacing:-0.6px">0</div>
<div class="t" style="left:607px;top:255px;width:81px;text-align:center;letter-spacing:-0.6px">0</div>
<div class="t" style="left:689px;top:255px;width:81px;text-align:center;letter-spacing:-0.6px">0</div>
<div class="a" style="left:2px;top:295px;width:769px;height:1px;background:#c8c8c8"></div>
<div class="t" style="left:2px;top:276px;width:49px;text-align:center;letter-spacing:-0.6px">87</div>
<div class="t" style="left:56px;top:276px;width:265px;text-align:left;">Опора скользящая</div>
<div class="t" style="left:324px;top:276px;width:66px;text-align:center;letter-spacing:-0.6px">368.90</div>
<div class="t" style="left:391px;top:276px;width:66px;text-align:center;letter-spacing:-0.6px">131.10</div>
<div class="t" style="left:458px;top:276px;width:66px;text-align:center;letter-spacing:-0.6px">1304.50</div>
<div class="t" style="left:525px;top:276px;width:81px;text-align:center;letter-spacing:-0.6px">0</div>
<div class="t" style="left:607px;top:276px;width:81px;text-align:center;letter-spacing:-0.6px">0</div>
<div class="t" style="left:689px;top:276px;width:81px;text-align:center;letter-spacing:-0.6px">0</div>
<div class="a" style="left:2px;top:316px;width:769px;height:1px;background:#c8c8c8"></div>
<div class="t" style="left:2px;top:297px;width:49px;text-align:center;letter-spacing:-0.6px">95</div>
<div class="t" style="left:56px;top:297px;width:265px;text-align:left;">Опора скользящая</div>
<div class="t" style="left:324px;top:297px;width:66px;text-align:center;letter-spacing:-0.6px">603.30</div>
<div class="t" style="left:391px;top:297px;width:66px;text-align:center;letter-spacing:-0.6px">225.50</div>
<div class="t" style="left:458px;top:297px;width:66px;text-align:center;letter-spacing:-0.6px">2146.80</div>
<div class="t" style="left:525px;top:297px;width:81px;text-align:center;letter-spacing:-0.6px">0</div>
<div class="t" style="left:607px;top:297px;width:81px;text-align:center;letter-spacing:-0.6px">0</div>
<div class="t" style="left:689px;top:297px;width:81px;text-align:center;letter-spacing:-0.6px">0</div>
<div class="a" style="left:2px;top:337px;width:769px;height:1px;background:#c8c8c8"></div>
<div class="t" style="left:2px;top:318px;width:49px;text-align:center;letter-spacing:-0.6px">98</div>
<div class="t" style="left:56px;top:318px;width:265px;text-align:left;">Опора скользящая</div>
<div class="t" style="left:324px;top:318px;width:66px;text-align:center;letter-spacing:-0.6px">691</div>
<div class="t" style="left:391px;top:318px;width:66px;text-align:center;letter-spacing:-0.6px">235.60</div>
<div class="t" style="left:458px;top:318px;width:66px;text-align:center;letter-spacing:-0.6px">2433.50</div>
<div class="t" style="left:525px;top:318px;width:81px;text-align:center;letter-spacing:-0.6px">0</div>
<div class="t" style="left:607px;top:318px;width:81px;text-align:center;letter-spacing:-0.6px">0</div>
<div class="t" style="left:689px;top:318px;width:81px;text-align:center;letter-spacing:-0.6px">0</div>
<div class="a" style="left:2px;top:358px;width:769px;height:1px;background:#c8c8c8"></div>
<div class="t" style="left:2px;top:339px;width:49px;text-align:center;letter-spacing:-0.6px">99</div>
<div class="t" style="left:56px;top:339px;width:265px;text-align:left;">Опора скользящая</div>
<div class="t" style="left:324px;top:339px;width:66px;text-align:center;letter-spacing:-0.6px">253.60</div>
<div class="t" style="left:391px;top:339px;width:66px;text-align:center;letter-spacing:-0.6px">61.60</div>
<div class="t" style="left:458px;top:339px;width:66px;text-align:center;letter-spacing:-0.6px">869.80</div>
<div class="t" style="left:525px;top:339px;width:81px;text-align:center;letter-spacing:-0.6px">0</div>
<div class="t" style="left:607px;top:339px;width:81px;text-align:center;letter-spacing:-0.6px">0</div>
<div class="t" style="left:689px;top:339px;width:81px;text-align:center;letter-spacing:-0.6px">0</div>
<div class="a" style="left:2px;top:379px;width:769px;height:1px;background:#c8c8c8"></div>
<div class="t" style="left:2px;top:360px;width:49px;text-align:center;letter-spacing:-0.6px">113</div>
<div class="t" style="left:56px;top:360px;width:265px;text-align:left;">Опора скользящая</div>
<div class="t" style="left:324px;top:360px;width:66px;text-align:center;letter-spacing:-0.6px">691.60</div>
<div class="t" style="left:391px;top:360px;width:66px;text-align:center;letter-spacing:-0.6px">255.20</div>
<div class="t" style="left:458px;top:360px;width:66px;text-align:center;letter-spacing:-0.6px">2456.70</div>
<div class="t" style="left:525px;top:360px;width:81px;text-align:center;letter-spacing:-0.6px">0</div>
<div class="t" style="left:607px;top:360px;width:81px;text-align:center;letter-spacing:-0.6px">0</div>
<div class="t" style="left:689px;top:360px;width:81px;text-align:center;letter-spacing:-0.6px">0</div>
<div class="a" style="left:2px;top:400px;width:769px;height:1px;background:#c8c8c8"></div>
<div class="t" style="left:2px;top:381px;width:49px;text-align:center;letter-spacing:-0.6px">114</div>
<div class="t" style="left:56px;top:381px;width:265px;text-align:left;">Опора скользящая</div>
<div class="t" style="left:324px;top:381px;width:66px;text-align:center;letter-spacing:-0.6px">505.40</div>
<div class="t" style="left:391px;top:381px;width:66px;text-align:center;letter-spacing:-0.6px">217.80</div>
<div class="t" style="left:458px;top:381px;width:66px;text-align:center;letter-spacing:-0.6px">1834.30</div>
<div class="t" style="left:525px;top:381px;width:81px;text-align:center;letter-spacing:-0.6px">0</div>
<div class="t" style="left:607px;top:381px;width:81px;text-align:center;letter-spacing:-0.6px">0</div>
<div class="t" style="left:689px;top:381px;width:81px;text-align:center;letter-spacing:-0.6px">0</div>
<div class="a" style="left:2px;top:421px;width:769px;height:1px;background:#c8c8c8"></div>
<div class="t" style="left:2px;top:402px;width:49px;text-align:center;letter-spacing:-0.6px">115</div>
<div class="t" style="left:56px;top:402px;width:265px;text-align:left;">Опора скользящая</div>
<div class="t" style="left:324px;top:402px;width:66px;text-align:center;letter-spacing:-0.6px">669.40</div>
<div class="t" style="left:391px;top:402px;width:66px;text-align:center;letter-spacing:-0.6px">230.90</div>
<div class="t" style="left:458px;top:402px;width:66px;text-align:center;letter-spacing:-0.6px">2360.30</div>
<div class="t" style="left:525px;top:402px;width:81px;text-align:center;letter-spacing:-0.6px">0</div>
<div class="t" style="left:607px;top:402px;width:81px;text-align:center;letter-spacing:-0.6px">0</div>
<div class="t" style="left:689px;top:402px;width:81px;text-align:center;letter-spacing:-0.6px">0</div>
<div class="a" style="left:2px;top:442px;width:769px;height:1px;background:#c8c8c8"></div>
<div class="t" style="left:2px;top:423px;width:49px;text-align:center;letter-spacing:-0.6px">116</div>
<div class="t" style="left:56px;top:423px;width:265px;text-align:left;">Опора скользящая</div>
<div class="t" style="left:324px;top:423px;width:66px;text-align:center;letter-spacing:-0.6px">178.90</div>
<div class="t" style="left:391px;top:423px;width:66px;text-align:center;letter-spacing:-0.6px">77.70</div>
<div class="t" style="left:458px;top:423px;width:66px;text-align:center;letter-spacing:-0.6px">650.10</div>
<div class="t" style="left:525px;top:423px;width:81px;text-align:center;letter-spacing:-0.6px">0</div>
<div class="t" style="left:607px;top:423px;width:81px;text-align:center;letter-spacing:-0.6px">0</div>
<div class="t" style="left:689px;top:423px;width:81px;text-align:center;letter-spacing:-0.6px">0</div>
<div class="a" style="left:2px;top:463px;width:769px;height:1px;background:#c8c8c8"></div>
<div class="t" style="left:2px;top:444px;width:49px;text-align:center;letter-spacing:-0.6px">117</div>
<div class="t" style="left:56px;top:444px;width:265px;text-align:left;">Опора скользящая</div>
<div class="t" style="left:324px;top:444px;width:66px;text-align:center;letter-spacing:-0.6px">488.90</div>
<div class="t" style="left:391px;top:444px;width:66px;text-align:center;letter-spacing:-0.6px">241.70</div>
<div class="t" style="left:458px;top:444px;width:66px;text-align:center;letter-spacing:-0.6px">1818</div>
<div class="t" style="left:525px;top:444px;width:81px;text-align:center;letter-spacing:-0.6px">0</div>
<div class="t" style="left:607px;top:444px;width:81px;text-align:center;letter-spacing:-0.6px">0</div>
<div class="t" style="left:689px;top:444px;width:81px;text-align:center;letter-spacing:-0.6px">0</div>
<div class="a" style="left:2px;top:484px;width:769px;height:1px;background:#c8c8c8"></div>
<div class="t" style="left:2px;top:465px;width:49px;text-align:center;letter-spacing:-0.6px">118</div>
<div class="t" style="left:56px;top:465px;width:265px;text-align:left;">Опора скользящая</div>
<div class="t" style="left:324px;top:465px;width:66px;text-align:center;letter-spacing:-0.6px">325.20</div>
<div class="t" style="left:391px;top:465px;width:66px;text-align:center;letter-spacing:-0.6px">1.50</div>
<div class="t" style="left:458px;top:465px;width:66px;text-align:center;letter-spacing:-0.6px">1083.90</div>
<div class="t" style="left:525px;top:465px;width:81px;text-align:center;letter-spacing:-0.6px">0</div>
<div class="t" style="left:607px;top:465px;width:81px;text-align:center;letter-spacing:-0.6px">0</div>
<div class="t" style="left:689px;top:465px;width:81px;text-align:center;letter-spacing:-0.6px">0</div>
<div class="a" style="left:2px;top:505px;width:769px;height:1px;background:#c8c8c8"></div>
<div class="t" style="left:2px;top:486px;width:49px;text-align:center;letter-spacing:-0.6px">120</div>
<div class="t" style="left:56px;top:486px;width:265px;text-align:left;">Опора скользящая</div>
<div class="t" style="left:324px;top:486px;width:66px;text-align:center;letter-spacing:-0.6px">368.50</div>
<div class="t" style="left:391px;top:486px;width:66px;text-align:center;letter-spacing:-0.6px">105.90</div>
<div class="t" style="left:458px;top:486px;width:66px;text-align:center;letter-spacing:-0.6px">1277.50</div>
<div class="t" style="left:525px;top:486px;width:81px;text-align:center;letter-spacing:-0.6px">0</div>
<div class="t" style="left:607px;top:486px;width:81px;text-align:center;letter-spacing:-0.6px">0</div>
<div class="t" style="left:689px;top:486px;width:81px;text-align:center;letter-spacing:-0.6px">0</div>
<div class="a" style="left:2px;top:526px;width:769px;height:1px;background:#c8c8c8"></div>
<div class="t" style="left:2px;top:507px;width:49px;text-align:center;letter-spacing:-0.6px">121</div>
<div class="t" style="left:56px;top:507px;width:265px;text-align:left;">Опора скользящая</div>
<div class="t" style="left:324px;top:507px;width:66px;text-align:center;letter-spacing:-0.6px">317.60</div>
<div class="t" style="left:391px;top:507px;width:66px;text-align:center;letter-spacing:-0.6px">9.30</div>
<div class="t" style="left:458px;top:507px;width:66px;text-align:center;letter-spacing:-0.6px">1057.70</div>
<div class="t" style="left:525px;top:507px;width:81px;text-align:center;letter-spacing:-0.6px">0</div>
<div class="t" style="left:607px;top:507px;width:81px;text-align:center;letter-spacing:-0.6px">0</div>
<div class="t" style="left:689px;top:507px;width:81px;text-align:center;letter-spacing:-0.6px">0</div>
<div class="a" style="left:2px;top:547px;width:769px;height:1px;background:#c8c8c8"></div>
<div class="t" style="left:2px;top:528px;width:49px;text-align:center;letter-spacing:-0.6px">122</div>
<div class="t" style="left:56px;top:528px;width:265px;text-align:left;">Опора скользящая</div>
<div class="t" style="left:324px;top:528px;width:66px;text-align:center;letter-spacing:-0.6px">303.30</div>
<div class="t" style="left:391px;top:528px;width:66px;text-align:center;letter-spacing:-0.6px">33.30</div>
<div class="t" style="left:458px;top:528px;width:66px;text-align:center;letter-spacing:-0.6px">3469.50</div>
<div class="t" style="left:525px;top:528px;width:81px;text-align:center;letter-spacing:-0.6px">0</div>
<div class="t" style="left:607px;top:528px;width:81px;text-align:center;letter-spacing:-0.6px">0</div>
<div class="t" style="left:689px;top:528px;width:81px;text-align:center;letter-spacing:-0.6px">0</div>
<div class="a" style="left:51px;top:44px;width:1px;height:497px;background:#c8c8c8"></div>
<div class="a" style="left:323px;top:44px;width:1px;height:497px;background:#c8c8c8"></div>
<div class="a" style="left:390px;top:44px;width:1px;height:497px;background:#c8c8c8"></div>
<div class="a" style="left:457px;top:44px;width:1px;height:497px;background:#c8c8c8"></div>
<div class="a" style="left:524px;top:44px;width:1px;height:497px;background:#c8c8c8"></div>
<div class="a" style="left:606px;top:44px;width:1px;height:497px;background:#c8c8c8"></div>
<div class="a" style="left:688px;top:44px;width:1px;height:497px;background:#c8c8c8"></div>
<div class="a" style="left:770px;top:44px;width:1px;height:497px;background:#c8c8c8"></div>
<div class="a" style="left:1143px;top:2px;width:18px;height:539px;background:#f0f0f0"></div>
<div class="a" style="left:1144px;top:19px;width:15px;height:104px;background:#cdcdcd"></div>
<svg style="left:1147px;top:8px" width="9" height="6" viewBox="0 0 9 6"><path d="M1 5L4.5 1.5L8 5" stroke="#606060" stroke-width="1.8" fill="none"/></svg>
<svg style="left:1148px;top:528px" width="9" height="6" viewBox="0 0 9 6"><path d="M1 1L4.5 4.5L8 1" stroke="#606060" stroke-width="1.8" fill="none"/></svg>
</div>
<!-- bottom panel -->
<div class="a" style="left:4px;top:726px;width:1370px;height:25px;background:#f7f7f1"></div>
<div class="t" style="left:7px;top:731px;font-size:12px">Ошибки и предупреждения</div>
<svg style="left:1339px;top:734px" width="8" height="9" viewBox="0 0 8 9"><path d="M1.5 0.5h5M2.5 0.5v4M5.5 0.5v4M0.5 5.5h7M4 5.5v3.5" stroke="#222" fill="none"/></svg>
<svg style="left:1358px;top:734px" width="9" height="9" viewBox="0 0 9 9"><path fill="none" d="M0.5 0.5L8.5 8.5M8.5 0.5L0.5 8.5" stroke="#333" stroke-width="1"/></svg>
<div class="a" style="left:4px;top:751px;width:1370px;height:144px;border:1px solid #a9a794;background:#f1f0e8"></div>
<div class="a" style="left:6px;top:753px;width:1367px;height:140px;border-left:2px solid #74736b;border-top:2px solid #74736b;border-right:1px solid #a9a794;border-bottom:1px solid #a9a794"></div>
<div class="a" style="left:7px;top:754px;width:1364px;height:138px;background:#f0f0f0;overflow:hidden" id="bgrid">
<div class="a" style="left:0px;top:0px;width:1364px;height:1px;background:#6e6e6e"></div>
<div class="a" style="left:0px;top:0px;width:1px;height:121px;background:#6e6e6e"></div>
<div class="a" style="left:1px;top:1px;width:107px;height:21px;background:#f0f0f0;border-right:1px solid #6c6c6c;border-bottom:1px solid #6c6c6c"></div>
<div class="a" style="left:108px;top:1px;width:85px;height:21px;background:#f0f0f0;border-right:1px solid #6c6c6c;border-bottom:1px solid #6c6c6c"></div>
<div class="a" style="left:193px;top:1px;width:1099px;height:21px;background:#f0f0f0;border-right:1px solid #6c6c6c;border-bottom:1px solid #6c6c6c"></div>
<div class="a" style="left:1292px;top:1px;width:55px;height:21px;background:#f0f0f0;border-bottom:1px solid #6c6c6c"></div>
<div class="t" style="left:1px;top:3px;width:106px;text-align:center;">Тип</div>
<div class="t" style="left:108px;top:3px;width:84px;text-align:center;">Узел/участок</div>
<div class="t" style="left:197px;top:3px;width:300px;text-align:left;">Описание</div>
<div class="t" style="left:1292px;top:3px;width:55px;text-align:center;">Справка</div>
<div class="a" style="left:1px;top:22px;width:107px;height:25px;background:#f0f0f0;border-right:1px solid #6c6c6c;border-bottom:1px solid #6c6c6c"></div>
<div class="a" style="left:108px;top:22px;width:1184px;height:25px;background:#fff;border-bottom:1px solid #c8c8c8"></div>
<div class="a" style="left:192px;top:22px;width:1px;height:25px;background:#c8c8c8"></div>
<div class="a" style="left:1291px;top:22px;width:1px;height:25px;background:#c8c8c8"></div>
<div class="a" style="left:1292px;top:22px;width:55px;height:25px;background:#f0f0f0;border-top:1px solid #fff;border-bottom:2px solid #6c6c6c"></div>
<div class="t" style="left:1px;top:24px;width:106px;text-align:center;">Примечание</div>
<div class="t" style="left:108px;top:23px;width:84px;text-align:center;letter-spacing:-0.35px">Узел:132</div>
<div class="t" style="left:196px;top:23px;width:1090px;text-align:left;letter-spacing:-0.05px">(W305) Трубопровод поднимается над опорой (Рабочее состояние)</div>
<div class="t" style="left:1292px;top:27px;width:55px;text-align:center;">?</div>
<div class="a" style="left:1px;top:47px;width:107px;height:25px;background:#f0f0f0;border-right:1px solid #6c6c6c;border-bottom:1px solid #6c6c6c"></div>
<div class="a" style="left:108px;top:47px;width:1184px;height:25px;background:#fff;border-bottom:1px solid #c8c8c8"></div>
<div class="a" style="left:192px;top:47px;width:1px;height:25px;background:#c8c8c8"></div>
<div class="a" style="left:1291px;top:47px;width:1px;height:25px;background:#c8c8c8"></div>
<div class="a" style="left:1292px;top:47px;width:55px;height:25px;background:#f0f0f0;border-top:1px solid #fff;border-bottom:2px solid #6c6c6c"></div>
<div class="t" style="left:1px;top:49px;width:106px;text-align:center;">Примечание</div>
<div class="t" style="left:108px;top:48px;width:84px;text-align:center;letter-spacing:-0.35px">Узел:132</div>
<div class="t" style="left:196px;top:48px;width:1090px;text-align:left;letter-spacing:-0.05px">(W305) Трубопровод поднимается над опорой (Холодное состояние)</div>
<div class="t" style="left:1292px;top:52px;width:55px;text-align:center;">?</div>
<div class="a" style="left:1px;top:72px;width:107px;height:25px;background:#f0f0f0;border-right:1px solid #6c6c6c;border-bottom:1px solid #6c6c6c"></div>
<div class="a" style="left:108px;top:72px;width:1184px;height:25px;background:#fff;border-bottom:1px solid #c8c8c8"></div>
<div class="a" style="left:192px;top:72px;width:1px;height:25px;background:#c8c8c8"></div>
<div class="a" style="left:1291px;top:72px;width:1px;height:25px;background:#c8c8c8"></div>
<div class="a" style="left:1292px;top:72px;width:55px;height:25px;background:#f0f0f0;border-top:1px solid #fff;border-bottom:2px solid #6c6c6c"></div>
<div class="t" style="left:1px;top:74px;width:106px;text-align:center;">Примечание</div>
<div class="t" style="left:108px;top:73px;width:84px;text-align:center;letter-spacing:-0.35px">Узел:132</div>
<div class="t" style="left:196px;top:73px;width:1090px;text-align:left;letter-spacing:-0.05px">(W305) Трубопровод поднимается над опорой (Состояние при испытаниях)</div>
<div class="t" style="left:1292px;top:77px;width:55px;text-align:center;">?</div>
<div class="a" style="left:1px;top:97px;width:107px;height:25px;background:#f0f0f0;border-right:1px solid #6c6c6c;border-bottom:1px solid #6c6c6c"></div>
<div class="a" style="left:108px;top:97px;width:1184px;height:25px;background:#fff;border-bottom:1px solid #c8c8c8"></div>
<div class="a" style="left:192px;top:97px;width:1px;height:25px;background:#c8c8c8"></div>
<div class="a" style="left:1291px;top:97px;width:1px;height:25px;background:#c8c8c8"></div>
<div class="a" style="left:1292px;top:97px;width:55px;height:25px;background:#f0f0f0;border-top:1px solid #fff;border-bottom:2px solid #6c6c6c"></div>
<div class="t" style="left:1px;top:99px;width:106px;text-align:center;">Примечание</div>
<div class="t" style="left:108px;top:98px;width:84px;text-align:center;letter-spacing:-0.35px">Узел:31720</div>
<div class="t" style="left:196px;top:98px;width:1090px;text-align:left;letter-spacing:-0.05px">(W305) Трубопровод поднимается над опорой (Рабочее состояние)</div>
<div class="t" style="left:1292px;top:102px;width:55px;text-align:center;">?</div>
<div class="a" style="left:1347px;top:1px;width:17px;height:120px;background:#f0f0f0"></div>
<div class="a" style="left:1347px;top:18px;width:15px;height:17px;background:#cdcdcd"></div>
<svg style="left:1350px;top:8px" width="9" height="6" viewBox="0 0 9 6"><path d="M1 5L4.5 1.5L8 5" stroke="#606060" stroke-width="1.8" fill="none"/></svg>
<svg style="left:1350px;top:109px" width="9" height="6" viewBox="0 0 9 6"><path d="M1 1L4.5 4.5L8 1" stroke="#606060" stroke-width="1.8" fill="none"/></svg>
<div class="a" style="left:1px;top:121px;width:1363px;height:17px;background:#f0f0f0"></div>
<div class="a" style="left:18px;top:121px;width:1308px;height:16px;background:#cdcdcd"></div>
<svg style="left:4px;top:125px" width="6" height="9" viewBox="0 0 6 9"><path d="M5 1L1.5 4.5L5 8" stroke="#606060" stroke-width="1.8" fill="none"/></svg>
<svg style="left:1335px;top:125px" width="6" height="9" viewBox="0 0 6 9"><path d="M1 1L4.5 4.5L1 8" stroke="#606060" stroke-width="1.8" fill="none"/></svg>
</div>
<div class="a" style="left:4px;top:895px;width:1370px;height:3px;background:#fbfbfb"></div>
<div class="a" style="left:4px;top:899px;width:1408px;height:41px;background:#eceef9"></div>
<div class="a" style="left:310px;top:898px;width:1064px;height:1px;background:#a3a18f"></div>
<div class="a" style="left:5px;top:898px;width:120px;height:20px;background:#eeeeee;border-bottom:1px solid #d6d6d6"></div>
<div class="a" style="left:125px;top:898px;width:185px;height:21px;background:#fcfcfc;border:1px solid #dcdcdc;border-top:none"></div>
<svg style="left:8px;top:900px" width="16" height="16" viewBox="0 0 16 16"><rect x="0.5" y="1.5" width="15" height="13" fill="#fff" stroke="#4a6d9a"/><path fill="none" d="M1 4.5h14M1 7h14M1 9.5h14M1 12h14" stroke="#8bb2e0" stroke-width="1.4"/><path fill="none" d="M4.5 2v12" stroke="#c0603a"/></svg>
<div class="t" style="left:25px;top:902px;font-size:12px">Список участков</div>
<svg style="left:128px;top:900px" width="17" height="17" viewBox="0 0 17 17"><rect x="1.5" y="2.5" width="10" height="12" fill="#f4f6fa" stroke="#8a96aa"/><rect x="4" y="1" width="5" height="3" fill="#d9c070" stroke="#8a7a40" stroke-width="0.8"/><circle cx="12" cy="12.5" r="4" fill="#e0572e"/><path fill="none" d="M10.3 10.8l3.4 3.4M13.7 10.8l-3.4 3.4" stroke="#fff" stroke-width="1.2"/></svg>
<div class="t" style="left:146px;top:902px;font-size:12px">Ошибки и предупреждения</div>
<div class="t" style="left:6px;top:925px;font-size:11.7px">Для справки нажмите F1</div>
<div class="a" style="left:1293px;top:923px;width:29px;height:17px;border:1px solid #a8a8a0"></div>
<div class="a" style="left:1324px;top:923px;width:34px;height:17px;border:1px solid #a8a8a0"></div>
<div class="t" style="left:1326px;top:925px;font-size:12px">NUM</div>
<div class="a" style="left:1360px;top:923px;width:33px;height:17px;border:1px solid #a8a8a0"></div>
<svg style="left:1400px;top:927px" width="11" height="11" viewBox="0 0 11 11"><g fill="#b8b8a8"><rect x="8" y="0" width="2" height="2"/><rect x="4" y="4" width="2" height="2"/><rect x="8" y="4" width="2" height="2"/><rect x="0" y="8" width="2" height="2"/><rect x="4" y="8" width="2" height="2"/><rect x="8" y="8" width="2" height="2"/></g></svg>
<!-- toolbar icons -->
<svg style="left:16px;top:57px" width="16" height="16" viewBox="0 0 16 16"><path d="M2.5 1.5H9.5L12.5 4.5V14.5H2.5Z" fill="#fff" stroke="#3d4a66"/><path d="M9.5 1.5V4.5H12.5" fill="#dfe4ee" stroke="#3d4a66"/><path fill="none" d="M3 13.5h9" stroke="#aab4c8"/></svg>
<svg style="left:39px;top:57px" width="16" height="16" viewBox="0 0 16 16"><path d="M0.5 4.5H5.5L6.5 5.5H12.5V14.5H0.5Z" fill="#e8c060" stroke="#b08a30"/><path d="M2.5 8.5H15.5L12.5 14.5H0.5Z" fill="#f6d36b" stroke="#b08a30"/><path d="M9 3.5C10 1 13 1 14 3" stroke="#2f5fb0" stroke-width="1.4" fill="none"/><path d="M12.5 3.5L15 4L14.5 1.5" fill="#2f5fb0"/></svg>
<svg style="left:62px;top:57px" width="16" height="16" viewBox="0 0 16 16"><rect x="0.5" y="0.5" width="14" height="14" fill="#4848b0" stroke="#303080"/><rect x="3" y="1" width="9" height="6" fill="#f4f4fa"/><rect x="4" y="10" width="6" height="4" fill="#e0e0ee"/><rect x="5" y="11" width="2" height="2" fill="#303080"/></svg>
<svg style="left:85px;top:57px" width="16" height="16" viewBox="0 0 16 16"><rect x="0.5" y="0.5" width="14" height="14" fill="#4848b0" stroke="#303080"/><rect x="3" y="1" width="9" height="6" fill="#f4f4fa"/><path fill="none" d="M4 3h6M4 5h5" stroke="#8a8ab0"/><rect x="4" y="10" width="5" height="4" fill="#e0e0ee"/><path fill="none" d="M6 6L14 15" stroke="#e8b040" stroke-width="3"/><path fill="none" d="M6 6L14 15" stroke="#8a6020" stroke-width="0.6"/><path fill="none" d="M13 14l2 2" stroke="#d04040" stroke-width="2"/></svg>
<div class="a" style="left:108px;top:57px;width:1px;height:18px;background:#bdbec6"></div>
<svg style="left:115px;top:57px" width="16" height="16" viewBox="0 0 16 16"><path d="M1.5 1.5H8.5L11.5 4.5V14.5H1.5Z" fill="#fff" stroke="#3d4a66"/><circle cx="7.5" cy="8.5" r="3.5" fill="#dde4ee" stroke="#555"/><path fill="none" d="M10 11L14 15" stroke="#e08a30" stroke-width="2.2"/></svg>
<svg style="left:137px;top:57px" width="16" height="16" viewBox="0 0 16 16"><path d="M4.5 1.5H12.5L13.5 6.5H3.5Z" fill="#f4f4f4" stroke="#666"/><path d="M1.5 6.5H15.5V13.5H1.5Z" fill="#c8ccd4" stroke="#555"/><path fill="none" d="M2 8h13" stroke="#eee"/><rect x="11" y="10" width="2" height="1.5" fill="#333"/></svg>
<div class="a" style="left:160px;top:57px;width:1px;height:18px;background:#bdbec6"></div>
<svg style="left:166px;top:57px" width="16" height="16" viewBox="0 0 16 16"><rect x="0.5" y="1.5" width="15" height="13" fill="#2f62c8" stroke="#2650a8"/><rect x="1.5" y="3" width="3.5" height="6" fill="#fff"/><rect x="6.2" y="3" width="3.5" height="6" fill="#fff"/><rect x="11" y="3" width="3.5" height="6" fill="#fff"/><rect x="1.5" y="11" width="13" height="2" fill="#dfe8f8"/></svg>
<svg style="left:189px;top:57px" width="16" height="16" viewBox="0 0 16 16"><path d="M0.5 0.5H11.5L14.5 3.5V15.5H0.5Z" fill="#f4f6fb" stroke="#7d889c"/><path d="M11.5 0.5V3.5H14.5" fill="#fff" stroke="#7d889c"/><path d="M6 4V10.5H11M6 10.5L3 13.5" fill="none" stroke="#17951f" stroke-width="1.8"/><path d="M3.5 4.5L6 1.5L8.5 4.5ZM10.5 8L13.5 10.5L10.5 13ZM1.5 11.5V15H5Z" fill="#17951f"/></svg>
<svg style="left:211px;top:57px" width="16" height="16" viewBox="0 0 16 16"><path d="M1.5 1.5H9.5L12.5 4.5V14.5H1.5Z" fill="#fff" stroke="#6a7890"/><path fill="none" d="M3 5h6M3 7h6M3 9h3" stroke="#c0c8d4"/><circle cx="11" cy="11.5" r="4.3" fill="#26a33a" stroke="#1b7a2b"/><path d="M8.8 11.5l1.8 1.8 2.8-3.2" stroke="#fff" stroke-width="1.5" fill="none"/></svg>
<svg style="left:235px;top:57px" width="16" height="16" viewBox="0 0 16 16"><path d="M0.5 0.5H11.5L14.5 3.5V15.5H0.5Z" fill="#f4f6fb" stroke="#7d889c"/><path d="M11.5 0.5V3.5H14.5" fill="#fff" stroke="#7d889c"/><path d="M6 4V10.5H11M6 10.5L3 13.5" fill="none" stroke="#17951f" stroke-width="1.8"/><path d="M3.5 4.5L6 1.5L8.5 4.5ZM10.5 8L13.5 10.5L10.5 13ZM1.5 11.5V15H5Z" fill="#17951f"/><circle cx="11" cy="11.5" r="4.3" fill="#26a33a" stroke="#1b7a2b"/><path d="M8.8 11.5l1.8 1.8 2.8-3.2" stroke="#fff" stroke-width="1.5" fill="none"/></svg>
<div class="a" style="left:258px;top:57px;width:1px;height:18px;background:#bdbec6"></div>
<svg style="left:263px;top:57px" width="16" height="16" viewBox="0 0 16 16"><rect x="0.5" y="0.5" width="15" height="15" fill="#5a8ae0" stroke="#2d56a8"/><rect x="2" y="2" width="12" height="3" fill="#2d4fa0"/><g fill="#1f3f90"><rect x="2" y="7" width="2" height="2"/><rect x="5" y="7" width="2" height="2"/><rect x="8" y="7" width="2" height="2"/><rect x="2" y="11" width="2" height="2"/><rect x="5" y="11" width="2" height="2"/><rect x="8" y="11" width="2" height="2"/></g><rect x="11" y="7" width="2" height="2" fill="#d03030"/><rect x="11" y="11" width="2" height="2" fill="#1f3f90"/></svg>
<div class="a" style="left:287px;top:57px;width:1px;height:18px;background:#bdbec6"></div>
<svg style="left:293px;top:57px" width="16" height="16" viewBox="0 0 16 16"><path fill="none" d="M4 1L8 9M12 1L8 9" stroke="#b1b5ca" stroke-width="1.6"/><circle cx="5" cy="12" r="2.5" fill="none" stroke="#b1b5ca" stroke-width="1.6"/><circle cx="11" cy="12" r="2.5" fill="none" stroke="#b1b5ca" stroke-width="1.6"/></svg>
<svg style="left:316px;top:57px" width="16" height="16" viewBox="0 0 16 16"><path d="M0.5 1.5H6.5L8.5 3.5V11.5H0.5Z" fill="#eceef6" stroke="#b1b5ca"/><path d="M6.5 5.5H12.5L14.5 7.5V15.5H6.5Z" fill="#eceef6" stroke="#b1b5ca"/><path fill="none" d="M8 9h5M8 11h5M8 13h5" stroke="#b1b5ca"/></svg>
<svg style="left:339px;top:57px" width="16" height="16" viewBox="0 0 16 16"><rect x="0.5" y="2.5" width="10" height="12" fill="#c9ccdc" stroke="#b1b5ca"/><rect x="3" y="1" width="5" height="3" fill="#eee" stroke="#b1b5ca"/><path d="M6.5 7.5H14.5V15.5H6.5Z" fill="#eceef6" stroke="#b1b5ca"/><path fill="none" d="M8 10h5M8 12h5" stroke="#b1b5ca"/></svg>
<svg style="left:361px;top:66px" width="5" height="3" viewBox="0 0 5 3"><path d="M0 0h5l-2.5 3z" fill="#b1b5ca"/></svg>
<div class="a" style="left:373px;top:57px;width:1px;height:18px;background:#bdbec6"></div>
<svg style="left:380px;top:57px" width="16" height="16" viewBox="0 0 16 16"><path d="M4 4C9 2 14 5 12 11L10 14" stroke="#b1b5ca" stroke-width="2.2" fill="none"/><path d="M1 2V8H7Z" fill="#b1b5ca"/></svg>
<svg style="left:401px;top:57px" width="16" height="16" viewBox="0 0 16 16"><path d="M12 4C7 2 2 5 4 11L6 14" stroke="#b1b5ca" stroke-width="2.2" fill="none"/><path d="M15 2V8H9Z" fill="#b1b5ca"/></svg>
<div class="a" style="left:425px;top:57px;width:1px;height:18px;background:#bdbec6"></div>
<svg style="left:431px;top:57px" width="16" height="16" viewBox="0 0 16 16"><circle cx="8" cy="3.5" r="2.5" fill="none" stroke="#b1b5ca" stroke-width="1.5"/><path fill="none" d="M7 6L3 12M9 6L13 12M4 13.5H12" stroke="#b1b5ca" stroke-width="1.6"/><circle cx="2.5" cy="13" r="2" fill="none" stroke="#b1b5ca" stroke-width="1.4"/><circle cx="13.5" cy="13" r="2" fill="none" stroke="#b1b5ca" stroke-width="1.4"/></svg>
<div class="a" style="left:454px;top:57px;width:1px;height:18px;background:#bdbec6"></div>
<svg style="left:459px;top:57px" width="18" height="16" viewBox="0 0 18 16"><path d="M0.5 0.5V12L3.5 9L6 14L8 13L5.5 8H9.5Z" fill="#fff" stroke="#222"/><circle cx="11.5" cy="8.5" r="5.5" fill="#2f62d0" stroke="#1c3f98"/><text x="9" y="12" font-family="Liberation Sans" font-size="8.5" font-weight="bold" fill="#fff">?</text></svg>
<div class="a" style="left:791px;top:55px;width:23px;height:22px;border:1px solid #3d6bb4;background:linear-gradient(#eef1fa,#dde2f0)"></div>
<svg style="left:794px;top:59px" width="18" height="15" viewBox="0 0 18 15"><text x="1" y="12" font-family="Liberation Serif" font-weight="bold" font-size="12.5" fill="#b4b8d0">3D</text></svg>
<div class="a" style="left:817px;top:57px;width:1px;height:18px;background:#bdbec6"></div>
<svg style="left:823px;top:57px" width="16" height="16" viewBox="0 0 16 16"><defs><linearGradient id="bg1" x1="0" x2="1"><stop offset="0" stop-color="#fff"/><stop offset="1" stop-color="#4e6fb8"/></linearGradient></defs><path d="M3.5 2.5H6.5V5.5H7.5V9.5H6.5V15.5H0.5V9.5H1.5V5.5H3.5Z" fill="url(#bg1)" stroke="#1c3474"/><path d="M9.5 2.5H12.5V5.5H13.5V9.5H15.5V15.5H9.5V9.5H8.5V5.5H9.5Z" fill="url(#bg1)" stroke="#1c3474"/><path d="M7 7.5H9" stroke="#1c3474" stroke-width="2"/><path d="M1.5 9.5H6.5M9.5 9.5H14.5M2 5.5H7M9 5.5H13" stroke="#1c3474"/></svg>
<div class="a" style="left:846px;top:57px;width:1px;height:18px;background:#bdbec6"></div>
<svg style="left:851px;top:57px" width="17" height="16" viewBox="0 0 17 16"><path d="M2 4L9 1L16 4V12L9 15L2 12Z" fill="#c9ccdc" stroke="#b1b5ca"/><path fill="none" d="M2 4L9 7L16 4M9 7V15" stroke="#e6e8f2"/></svg>
<svg style="left:873px;top:66px" width="5" height="3" viewBox="0 0 5 3"><path d="M0 0h5l-2.5 3z" fill="#b1b5ca"/></svg>
<div class="a" style="left:886px;top:57px;width:1px;height:18px;background:#bdbec6"></div>
<svg style="left:891px;top:57px" width="16" height="16" viewBox="0 0 16 16"><path d="M0.5 0.5h10v10h-10z" fill="none" stroke="#b1b5ca" stroke-dasharray="2 1"/><circle cx="9" cy="9" r="4" fill="#eceef6" stroke="#b1b5ca" stroke-width="1.4"/><path fill="none" d="M12 12L15.5 15.5" stroke="#b1b5ca" stroke-width="2"/></svg>
<svg style="left:914px;top:57px" width="16" height="16" viewBox="0 0 16 16"><path d="M0.5 4V0.5H4M12 0.5H15.5V4M15.5 12V15.5H12M4 15.5H0.5V12" stroke="#b1b5ca" stroke-width="1.4" fill="none"/><circle cx="8" cy="8" r="4" fill="#eceef6" stroke="#b1b5ca" stroke-width="1.4"/><path fill="none" d="M11 11L14 14" stroke="#b1b5ca" stroke-width="2"/></svg>
<div class="a" style="left:938px;top:57px;width:1px;height:18px;background:#bdbec6"></div>
<svg style="left:946px;top:58px" width="11" height="15" viewBox="0 0 11 15"><path d="M0.5 0.5V12L3.5 9L6 14L8 13L5.5 8H9.5Z" fill="#f4f5fa" stroke="#b1b5ca"/></svg>
<svg style="left:967px;top:57px" width="16" height="16" viewBox="0 0 16 16"><path d="M8 0L11 3.5H9V7H12.5V5L16 8L12.5 11V9H9V12.5H11L8 16L5 12.5H7V9H3.5V11L0 8L3.5 5V7H7V3.5H5Z" fill="#c9ccdc" stroke="#b1b5ca" stroke-width="0.8"/></svg>
<svg style="left:990px;top:57px" width="16" height="16" viewBox="0 0 16 16"><circle cx="6" cy="6" r="5" fill="#f4f5fa" stroke="#b1b5ca" stroke-width="1.5"/><path fill="none" d="M6 3.5v5M3.5 6h5" stroke="#b1b5ca"/><path fill="none" d="M9.5 9.5L15 15" stroke="#b1b5ca" stroke-width="2.4"/></svg>
<div class="a" style="left:1010px;top:55px;width:23px;height:22px;border:1px solid #3d6bb4;background:linear-gradient(#eef1fa,#dde2f0)"></div>
<svg style="left:1013px;top:59px" width="16" height="16" viewBox="0 0 16 16"><path d="M3 7A5.5 5.5 0 0 1 13 5M13 9A5.5 5.5 0 0 1 3 11" stroke="#b1b5ca" stroke-width="2.4" fill="none"/><path d="M15 2V7H10ZM1 14V9H6Z" fill="#b1b5ca"/></svg>
<svg style="left:1036px;top:57px" width="16" height="16" viewBox="0 0 16 16"><path d="M3 7A5.5 5.5 0 0 1 13 5M13 9A5.5 5.5 0 0 1 3 11" stroke="#b1b5ca" stroke-width="2.4" fill="none"/><path d="M15 2V7H10ZM1 14V9H6Z" fill="#b1b5ca"/><path d="M8 6L10 8L8 10L6 8Z" fill="#b1b5ca"/></svg>
<svg style="left:1090px;top:57px" width="17" height="16" viewBox="0 0 17 16"><circle cx="4" cy="12" r="3" fill="#c9ccdc" stroke="#b1b5ca"/><circle cx="9.5" cy="12.5" r="3" fill="#c9ccdc" stroke="#b1b5ca"/><path d="M1.5 10L5 6.5M12 10.5L14 8.5" stroke="#b1b5ca" fill="none"/><path fill="none" d="M7 3.5h10M7 5h10" stroke="#b1b5ca" stroke-width="1.3"/><path fill="none" d="M8 1h1M11 1h1M14 1h1" stroke="#b1b5ca"/></svg>
<svg style="left:1112px;top:57px" width="17" height="16" viewBox="0 0 17 16"><circle cx="4" cy="12" r="3" fill="#c9ccdc" stroke="#b1b5ca"/><circle cx="9.5" cy="12.5" r="3" fill="#c9ccdc" stroke="#b1b5ca"/><path d="M1.5 10L5 6.5M12 10.5L14 8.5" stroke="#b1b5ca" fill="none"/><path fill="none" d="M10 0v5" stroke="#b1b5ca" stroke-width="1.5"/><circle cx="10" cy="6" r="1.8" fill="#b1b5ca"/></svg>
<svg style="left:1132px;top:57px" width="17" height="16" viewBox="0 0 17 16"><circle cx="4" cy="12" r="3" fill="#c9ccdc" stroke="#b1b5ca"/><circle cx="9.5" cy="12.5" r="3" fill="#c9ccdc" stroke="#b1b5ca"/><path d="M1.5 10L5 6.5M12 10.5L14 8.5" stroke="#b1b5ca" fill="none"/><path d="M6 1.5h10M11 1.5v5M9 5l2 2 2-2" stroke="#b1b5ca" stroke-width="1.3" fill="none"/></svg>
<svg style="left:1155px;top:57px" width="17" height="16" viewBox="0 0 17 16"><circle cx="4" cy="12" r="3" fill="#c9ccdc" stroke="#b1b5ca"/><circle cx="9.5" cy="12.5" r="3" fill="#c9ccdc" stroke="#b1b5ca"/><path d="M1.5 10L5 6.5M12 10.5L14 8.5" stroke="#b1b5ca" fill="none"/><path fill="none" d="M8 0v6M16 0v6" stroke="#b1b5ca" stroke-width="1.3"/><circle cx="12" cy="3" r="2" fill="none" stroke="#b1b5ca"/></svg>
<div class="a" style="left:1175px;top:55px;width:23px;height:22px;border:1px solid #3d6bb4;background:linear-gradient(#eef1fa,#dde2f0)"></div>
<svg style="left:1178px;top:57px" width="17" height="16" viewBox="0 0 17 16"><circle cx="4" cy="12" r="3" fill="#c9ccdc" stroke="#b1b5ca"/><circle cx="9.5" cy="12.5" r="3" fill="#c9ccdc" stroke="#b1b5ca"/><path d="M1.5 10L5 6.5M12 10.5L14 8.5" stroke="#b1b5ca" fill="none"/><circle cx="10" cy="5" r="2.2" fill="#c9ccdc"/></svg>
<svg style="left:1201px;top:57px" width="16" height="16" viewBox="0 0 16 16"><path fill="none" d="M1 9h14M1 11h14M6 7h4" stroke="#b1b5ca" stroke-width="1.6"/></svg>
<svg style="left:1222px;top:57px" width="17" height="16" viewBox="0 0 17 16"><circle cx="4" cy="12" r="3" fill="#c9ccdc" stroke="#b1b5ca"/><circle cx="9.5" cy="12.5" r="3" fill="#c9ccdc" stroke="#b1b5ca"/><path d="M1.5 10L5 6.5M12 10.5L14 8.5" stroke="#b1b5ca" fill="none"/><circle cx="11" cy="5" r="2.2" fill="none" stroke="#b1b5ca"/><text x="13" y="5" font-size="5" fill="#b1b5ca" font-family="Liberation Sans">10</text></svg>
<div class="a" style="left:1244px;top:55px;width:23px;height:22px;border:1px solid #3d6bb4;background:linear-gradient(#eef1fa,#dde2f0)"></div>
<div class="a" style="left:1267px;top:55px;width:23px;height:22px;border:1px solid #3d6bb4;background:linear-gradient(#eef1fa,#dde2f0)"></div>
<div class="a" style="left:1290px;top:55px;width:23px;height:22px;border:1px solid #3d6bb4;background:linear-gradient(#eef1fa,#dde2f0)"></div>
<svg style="left:1247px;top:57px" width="17" height="16" viewBox="0 0 17 16"><circle cx="4" cy="12" r="3" fill="#c9ccdc" stroke="#b1b5ca"/><circle cx="9.5" cy="12.5" r="3" fill="#c9ccdc" stroke="#b1b5ca"/><path d="M1.5 10L5 6.5M12 10.5L14 8.5" stroke="#b1b5ca" fill="none"/><circle cx="10" cy="5" r="2.2" fill="#c9ccdc"/><text x="13" y="6" font-size="7" fill="#b1b5ca" font-family="Liberation Sans">a</text></svg>
<svg style="left:1270px;top:57px" width="17" height="16" viewBox="0 0 17 16"><circle cx="4" cy="12" r="3" fill="#c9ccdc" stroke="#b1b5ca"/><circle cx="9.5" cy="12.5" r="3" fill="#c9ccdc" stroke="#b1b5ca"/><path d="M1.5 10L5 6.5M12 10.5L14 8.5" stroke="#b1b5ca" fill="none"/><path fill="none" d="M6 6h8M8 4h4" stroke="#b1b5ca" stroke-width="1.8"/><text x="13" y="6" font-size="7" fill="#b1b5ca" font-family="Liberation Sans">a</text></svg>
<svg style="left:1293px;top:57px" width="17" height="16" viewBox="0 0 17 16"><circle cx="4" cy="12" r="3" fill="#c9ccdc" stroke="#b1b5ca"/><circle cx="9.5" cy="12.5" r="3" fill="#c9ccdc" stroke="#b1b5ca"/><path d="M1.5 10L5 6.5M12 10.5L14 8.5" stroke="#b1b5ca" fill="none"/><path fill="none" d="M8 7h9M11 3v4" stroke="#b1b5ca" stroke-width="2.5"/></svg>
<div class="a" style="left:1317px;top:57px;width:1px;height:18px;background:#bdbec6"></div>
<svg style="left:1321px;top:57px" width="17" height="16" viewBox="0 0 17 16"><circle cx="4" cy="12" r="3" fill="#c9ccdc" stroke="#b1b5ca"/><circle cx="9.5" cy="12.5" r="3" fill="#c9ccdc" stroke="#b1b5ca"/><path d="M1.5 10L5 6.5M12 10.5L14 8.5" stroke="#b1b5ca" fill="none"/><path fill="none" d="M5 4h11M5 2v4M16 2v4M8 4l-1 1M13 4l1 1" stroke="#b1b5ca" stroke-width="1.2"/></svg>
<div class="a" style="left:1342px;top:55px;width:23px;height:22px;border:1px solid #3d6bb4;background:linear-gradient(#eef1fa,#dde2f0)"></div>
<svg style="left:1345px;top:57px" width="17" height="16" viewBox="0 0 17 16"><circle cx="4" cy="12" r="3" fill="#b1b5ca" stroke="#b1b5ca"/><circle cx="9.5" cy="12.5" r="3" fill="#b1b5ca"/><path fill="none" d="M1.5 10L5 6.5M12 10.5L14 8.5" stroke="#b1b5ca"/><path fill="none" d="M5 4h11M5 2v4M16 2v4" stroke="#b1b5ca" stroke-width="1.2"/></svg>
<div class="a" style="left:1369px;top:57px;width:1px;height:18px;background:#bdbec6"></div>
<svg style="left:1375px;top:57px" width="16" height="16" viewBox="0 0 16 16"><path d="M1.5 0.5H11.5L14.5 3.5V15.5H1.5Z" fill="#fff" stroke="#6a7890"/><path d="M5 2v10M3 4.5L5 2L7 4.5M5 12L3 15" stroke="#1f9a2a" stroke-width="1.6" fill="none"/><circle cx="11" cy="11" r="3.5" fill="#c9d0e4" stroke="#8a98b8"/></svg>
<svg style="left:16px;top:83px" width="16" height="16" viewBox="0 0 16 16"><path d="M0.5 6.5H13.5V15.5H0.5Z" fill="#eceef6" stroke="#b1b5ca"/><path fill="none" d="M2 9h6M2 11h6M2 13h8" stroke="#b1b5ca"/><path d="M3 6L8 2H12L16 4V8L12 6" fill="#c9ccdc" stroke="#b1b5ca"/></svg>
<svg style="left:40px;top:83px" width="16" height="16" viewBox="0 0 16 16"><rect x="0.5" y="5.5" width="5" height="4" fill="#c9ccdc" stroke="#b1b5ca"/><rect x="9.5" y="1.5" width="5" height="4" fill="#c9ccdc" stroke="#b1b5ca"/><rect x="9.5" y="10.5" width="5" height="4" fill="#c9ccdc" stroke="#b1b5ca"/><path fill="none" d="M6 7.5h2M8 3.5v9M8 3.5h1M8 12.5h1" stroke="#b1b5ca"/></svg>
<div class="a" style="left:62px;top:83px;width:1px;height:18px;background:#bdbec6"></div>
<svg style="left:68px;top:83px" width="16" height="16" viewBox="0 0 16 16"><path d="M3 1h3v3h3v3H6v3H3V7H0V4h3Z" fill="#eceef6" stroke="#b1b5ca"/><path fill="none" d="M4 15L15 4" stroke="#b1b5ca"/><circle cx="9.5" cy="9.5" r="2" fill="#b1b5ca"/></svg>
<svg style="left:91px;top:83px" width="16" height="16" viewBox="0 0 16 16"><path fill="none" d="M1 15L14 2" stroke="#b1b5ca"/><circle cx="5" cy="11" r="2" fill="#b1b5ca"/><path d="M8 14L14 8M10.5 8H14V11.5" stroke="#b1b5ca" fill="none"/></svg>
<svg style="left:114px;top:83px" width="16" height="16" viewBox="0 0 16 16"><path d="M3 1h3v3h3v3H6v3H3V7H0V4h3Z" fill="#eceef6" stroke="#b1b5ca"/><path fill="none" d="M4 15L15 4" stroke="#b1b5ca"/><circle cx="7" cy="12" r="1.8" fill="#b1b5ca"/><circle cx="10" cy="9" r="1.8" fill="#b1b5ca"/><circle cx="13" cy="6" r="1.8" fill="#b1b5ca"/></svg>
<svg style="left:137px;top:83px" width="16" height="16" viewBox="0 0 16 16"><path d="M1 15H5V5H10V15H15" stroke="#1f86d0" stroke-width="2.4" fill="none"/><path d="M3 0.5h3v3h3v3H6v3H3v-3H0v-3h3Z" fill="#f2d13c" stroke="#a08a10"/></svg>
<svg style="left:160px;top:83px" width="16" height="16" viewBox="0 0 16 16"><circle cx="8" cy="7" r="5" fill="#eceef6" stroke="#b1b5ca" stroke-width="1.4"/><path d="M1 9A7 7 0 0 0 5 15M15 9A7 7 0 0 1 11 15" stroke="#b1b5ca" fill="none"/><path d="M4 15h2l-1-2zM12 15h-2l1-2z" fill="#b1b5ca"/></svg>
<svg style="left:183px;top:83px" width="16" height="16" viewBox="0 0 16 16"><path d="M7 1V15H1Z" fill="#c9ccdc" stroke="#b1b5ca"/><path d="M9 1V15H15Z" fill="#c9ccdc" stroke="#b1b5ca"/><path fill="none" d="M8 0v16" stroke="#b1b5ca"/></svg>
<svg style="left:205px;top:83px" width="17" height="16" viewBox="0 0 17 16"><circle cx="3" cy="7" r="2.5" fill="#c9ccdc"/><circle cx="14" cy="7" r="2.5" fill="#c9ccdc"/><path d="M2 11v3M15 11v3M3 12.5h11M4 11.5l-1 1 1 1M13 11.5l1 1-1 1" stroke="#b1b5ca" fill="none"/><text x="7" y="5" font-size="6" fill="#b1b5ca" font-family="Liberation Sans">?</text></svg>
<svg style="left:229px;top:83px" width="16" height="16" viewBox="0 0 16 16"><path fill="none" d="M1 14L14 4M1 14H15" stroke="#b1b5ca" stroke-width="1.6"/><path fill="none" d="M0 15.5h16" stroke="#b1b5ca" stroke-width="1.5"/><path d="M8 14A6 6 0 0 0 6 10" stroke="#b1b5ca" fill="none"/><text x="11" y="5" font-size="6" fill="#b1b5ca" font-family="Liberation Sans">?</text></svg>
<div class="a" style="left:253px;top:83px;width:1px;height:18px;background:#bdbec6"></div>
<svg style="left:258px;top:83px" width="16" height="16" viewBox="0 0 16 16"><rect x="0.5" y="3.5" width="8" height="8" fill="#eceef6" stroke="#b1b5ca"/><rect x="4.5" y="7.5" width="8" height="8" fill="#eceef6" stroke="#b1b5ca"/><circle cx="4.5" cy="5" r="2.5" fill="#c9ccdc"/><circle cx="8.5" cy="10" r="2.5" fill="#c9ccdc"/><path d="M9 5L13 1V3.5H16V6.5H13V9Z" fill="#b1b5ca"/></svg>
<svg style="left:281px;top:83px" width="16" height="16" viewBox="0 0 16 16"><rect x="0.5" y="3.5" width="8" height="8" fill="#eceef6" stroke="#b1b5ca"/><rect x="4.5" y="7.5" width="8" height="8" fill="#eceef6" stroke="#b1b5ca"/><path d="M9 5L13 1V3.5H16V6.5H13V9Z" fill="#b1b5ca"/></svg>
<div class="a" style="left:304px;top:83px;width:1px;height:18px;background:#bdbec6"></div>
<svg style="left:311px;top:83px" width="16" height="16" viewBox="0 0 16 16"><path fill="none" d="M1 1L14 14M14 1L1 14" stroke="#b1b5ca" stroke-width="1.6"/></svg>
<svg style="left:332px;top:92px" width="5" height="3" viewBox="0 0 5 3"><path d="M0 0h5l-2.5 3z" fill="#b1b5ca"/></svg>
<div class="a" style="left:1375px;top:106px;width:35px;height:585px;border-radius:3px 3px 0 0;background:linear-gradient(90deg,#f6f7fc,#e6e9f4 55%,#cfd3e3)"></div>
<div class="a" style="left:1375px;top:690px;width:34px;height:13px;border-radius:0 0 3px 3px;background:linear-gradient(90deg,#c5cadb,#d8dbe6 60%,#e2e4ec)"></div>
<div class="a" style="left:1378px;top:111px;width:26px;height:2px;background:repeating-linear-gradient(90deg,#a9a99a 0 2px,transparent 2px 4px)"></div>
<svg style="left:1401px;top:694px" width="8" height="9" viewBox="0 0 8 9"><path fill="none" d="M0.5 0v9" stroke="#000" stroke-width="1.5"/><path d="M3 0.5L7 4.5L3 8.5Z" fill="#000"/></svg>
<svg style="left:1379px;top:120px" width="16" height="16" viewBox="0 0 16 16"><rect x="1" y="4" width="14" height="8" rx="3" fill="#1c6fd8" stroke="#0b3f8e"/><path fill="none" d="M3 6h10" stroke="#7fb8f0" stroke-width="1.2"/></svg>
<svg style="left:1401px;top:127px" width="5" height="3" viewBox="0 0 5 3"><path d="M0 0h5l-2.5 3z" fill="#000"/></svg>
<svg style="left:1379px;top:140px" width="16" height="16" viewBox="0 0 16 16"><path d="M3 16V9A6 6 0 0 1 9 3H15V9H10A1 1 0 0 0 9 10V16Z" fill="#c9ccdc" stroke="#b1b5ca" stroke-width="0.8"/></svg>
<svg style="left:1401px;top:147px" width="5" height="3" viewBox="0 0 5 3"><path d="M0 0h5l-2.5 3z" fill="#b1b5ca"/></svg>
<svg style="left:1379px;top:163px" width="16" height="16" viewBox="0 0 16 16"><path d="M0 9H5V6H11V9H16V15H0Z" fill="#c9ccdc" stroke="#b1b5ca" stroke-width="0.8"/><rect x="6" y="3" width="4" height="3" fill="#c9ccdc"/></svg>
<svg style="left:1401px;top:170px" width="5" height="3" viewBox="0 0 5 3"><path d="M0 0h5l-2.5 3z" fill="#b1b5ca"/></svg>
<svg style="left:1379px;top:185px" width="16" height="16" viewBox="0 0 16 16"><path d="M2 1L14 8L2 15Z" fill="#c9ccdc" stroke="#b1b5ca" stroke-width="0.8"/></svg>
<svg style="left:1401px;top:192px" width="5" height="3" viewBox="0 0 5 3"><path d="M0 0h5l-2.5 3z" fill="#b1b5ca"/></svg>
<svg style="left:1384px;top:207px" width="16" height="16" viewBox="0 0 16 16"><path d="M1 2H15V15H11A3 3 0 0 0 5 15H1Z" fill="#c9ccdc" stroke="#b1b5ca" stroke-width="0.8"/><circle cx="8" cy="9" r="2.5" fill="#e8eaf3"/></svg>
<svg style="left:1384px;top:230px" width="16" height="16" viewBox="0 0 16 16"><path d="M5 1H8A7 7 0 0 1 8 15H5Z" fill="#c9ccdc" stroke="#b1b5ca" stroke-width="0.8"/></svg>
<svg style="left:1384px;top:252px" width="16" height="16" viewBox="0 0 16 16"><path d="M1 2L8 8L15 2V14L8 8L1 14Z" fill="#c9ccdc" stroke="#b1b5ca" stroke-width="0.8"/></svg>
<svg style="left:1384px;top:273px" width="16" height="16" viewBox="0 0 16 16"><rect x="1" y="5" width="14" height="7" fill="#c9ccdc"/><path fill="none" d="M5 1V16M11 1V16M3 3L13 14M13 3L3 14" stroke="#b1b5ca" stroke-width="1.2"/></svg>
<svg style="left:1384px;top:295px" width="16" height="16" viewBox="0 0 16 16"><path d="M0 6H6V3H11V14H6V11H0Z" fill="#c9ccdc" stroke="#b1b5ca" stroke-width="0.8"/><rect x="11" y="5" width="4" height="7" fill="#c9ccdc"/></svg>
<div class="a" style="left:1377px;top:318px;width:30px;height:1px;background:#c5c6c0"></div>
<div class="a" style="left:1377px;top:319px;width:30px;height:1px;background:#fbfbff"></div>
<svg style="left:1384px;top:324px" width="16" height="16" viewBox="0 0 16 16"><path fill="none" d="M1 1L15 15M15 1L1 15" stroke="#b1b5ca" stroke-width="2"/></svg>
<svg style="left:1384px;top:345px" width="16" height="16" viewBox="0 0 16 16"><path fill="none" d="M0 2.5h16M0 4.5h16M0 11.5h16" stroke="#b1b5ca" stroke-width="1.4"/><path fill="none" d="M8 5L4 11M8 5L12 11M5 8.5h6" stroke="#b1b5ca"/><path fill="none" d="M2 14l-1 2M6 14l-1 2M10 14l-1 2M14 14l-1 2" stroke="#b1b5ca"/></svg>
<svg style="left:1384px;top:368px" width="16" height="16" viewBox="0 0 16 16"><path fill="none" d="M0 4h16M0 7h16M0 10h16" stroke="#b1b5ca" stroke-width="1.6"/><path fill="none" d="M2 12l-2 3M6 12l-2 3M10 12l-2 3M14 12l-2 3" stroke="#b1b5ca"/></svg>
<svg style="left:1384px;top:389px" width="16" height="16" viewBox="0 0 16 16"><path fill="none" d="M0 1.5h16M0 14.5h16M0 4.5h14M2 8h14M0 11.5h14" stroke="#b1b5ca" stroke-width="1.5"/></svg>
<svg style="left:1384px;top:411px" width="16" height="16" viewBox="0 0 16 16"><path fill="none" d="M0 1.5h16M0 14.5h16M0 4.5h14M2 8h14M0 11.5h14" stroke="#b1b5ca" stroke-width="1.5"/><path fill="none" d="M0 0v16" stroke="#b1b5ca" stroke-width="2"/></svg>
<svg style="left:1381px;top:433px" width="16" height="16" viewBox="0 0 16 16"><circle cx="8" cy="7" r="4.5" fill="#c9ccdc" stroke="#b1b5ca"/><path d="M0 7h3M13 7h3M6 12h4l-2 3z" stroke="#b1b5ca" fill="#b1b5ca"/></svg>
<svg style="left:1401px;top:440px" width="5" height="3" viewBox="0 0 5 3"><path d="M0 0h5l-2.5 3z" fill="#b1b5ca"/></svg>
<svg style="left:1384px;top:454px" width="16" height="16" viewBox="0 0 16 16"><path fill="none" d="M0 12.5h16M0 14.5h16M8 7v5M5 10h6" stroke="#b1b5ca" stroke-width="1.5"/></svg>
<svg style="left:1381px;top:477px" width="16" height="16" viewBox="0 0 16 16"><path d="M0 12.5h16M0 14.5h16M8 5v6M5 8l3-3 3 3" stroke="#b1b5ca" stroke-width="1.5" fill="none"/></svg>
<svg style="left:1401px;top:484px" width="5" height="3" viewBox="0 0 5 3"><path d="M0 0h5l-2.5 3z" fill="#b1b5ca"/></svg>
<svg style="left:1384px;top:499px" width="16" height="16" viewBox="0 0 16 16"><path fill="none" d="M4 2h10M9 2v10M4 12h10M6 15h6" stroke="#b1b5ca" stroke-width="1.6"/><text x="0" y="11" font-size="8" fill="#b1b5ca" font-family="Liberation Sans">?</text></svg>
<svg style="left:1384px;top:520px" width="16" height="16" viewBox="0 0 16 16"><path fill="none" d="M0 12.5h16M0 14.5h16" stroke="#b1b5ca" stroke-width="1.5"/><text x="3" y="10" font-size="7" font-weight="bold" fill="#b1b5ca" font-family="Liberation Sans">M</text></svg>
<div class="a" style="left:1377px;top:544px;width:30px;height:1px;background:#c5c6c0"></div>
<div class="a" style="left:1377px;top:545px;width:30px;height:1px;background:#fbfbff"></div>
<svg style="left:1384px;top:549px" width="16" height="16" viewBox="0 0 16 16"><rect x="1.5" y="1.5" width="13" height="13" fill="none" stroke="#b1b5ca"/><rect x="3" y="4" width="10" height="8" fill="#c9ccdc"/><path fill="none" d="M5 3v10M8 3v10M11 3v10" stroke="#e8eaf3"/></svg>
<svg style="left:1381px;top:570px" width="16" height="16" viewBox="0 0 16 16"><rect x="1" y="4" width="14" height="8" fill="#c9ccdc"/><path fill="none" d="M3 3v10M6 3v10M9 3v10M12 3v10" stroke="#b1b5ca"/></svg>
<svg style="left:1401px;top:577px" width="5" height="3" viewBox="0 0 5 3"><path d="M0 0h5l-2.5 3z" fill="#b1b5ca"/></svg>
<svg style="left:1384px;top:592px" width="16" height="16" viewBox="0 0 16 16"><path d="M1 4h3v8H1ZM12 4h3v8h-3Z" fill="#c9ccdc"/><rect x="4" y="2" width="8" height="12" fill="#c9ccdc"/><path fill="none" d="M5 2v12M8 2v12M11 2v12" stroke="#b1b5ca"/></svg>
<svg style="left:1384px;top:613px" width="16" height="16" viewBox="0 0 16 16"><rect x="6" y="6" width="10" height="9" fill="#c9ccdc"/><path fill="none" d="M7 5v11M10 5v11M13 5v11" stroke="#b1b5ca"/><text x="0" y="8" font-size="8" fill="#b1b5ca" font-family="Liberation Sans">?</text></svg>
<div class="a" style="left:1377px;top:638px;width:30px;height:1px;background:#c5c6c0"></div>
<div class="a" style="left:1377px;top:639px;width:30px;height:1px;background:#fbfbff"></div>
<svg style="left:1381px;top:643px" width="16" height="16" viewBox="0 0 16 16"><path d="M2 9A6 6 0 0 1 14 9Z" fill="#eceef6" stroke="#b1b5ca" stroke-width="1.2"/><path fill="none" d="M8 9l3-3" stroke="#b1b5ca"/><path fill="none" d="M0 12h16M0 14h16" stroke="#b1b5ca" stroke-width="1.3"/><rect x="6" y="11" width="4" height="4" fill="#b1b5ca"/></svg>
<svg style="left:1401px;top:650px" width="5" height="3" viewBox="0 0 5 3"><path d="M0 0h5l-2.5 3z" fill="#b1b5ca"/></svg>
<svg style="left:1384px;top:666px" width="16" height="16" viewBox="0 0 16 16"><path fill="none" d="M0 6.5h16M0 9h16" stroke="#b1b5ca" stroke-width="1.4"/><path fill="none" d="M3 4l-2 3M7 4l-2 3M11 4l-2 3M15 4l-2 3M3 9l-2 3M7 9l-2 3M11 9l-2 3M15 9l-2 3" stroke="#b1b5ca"/></svg>
</body></html>
